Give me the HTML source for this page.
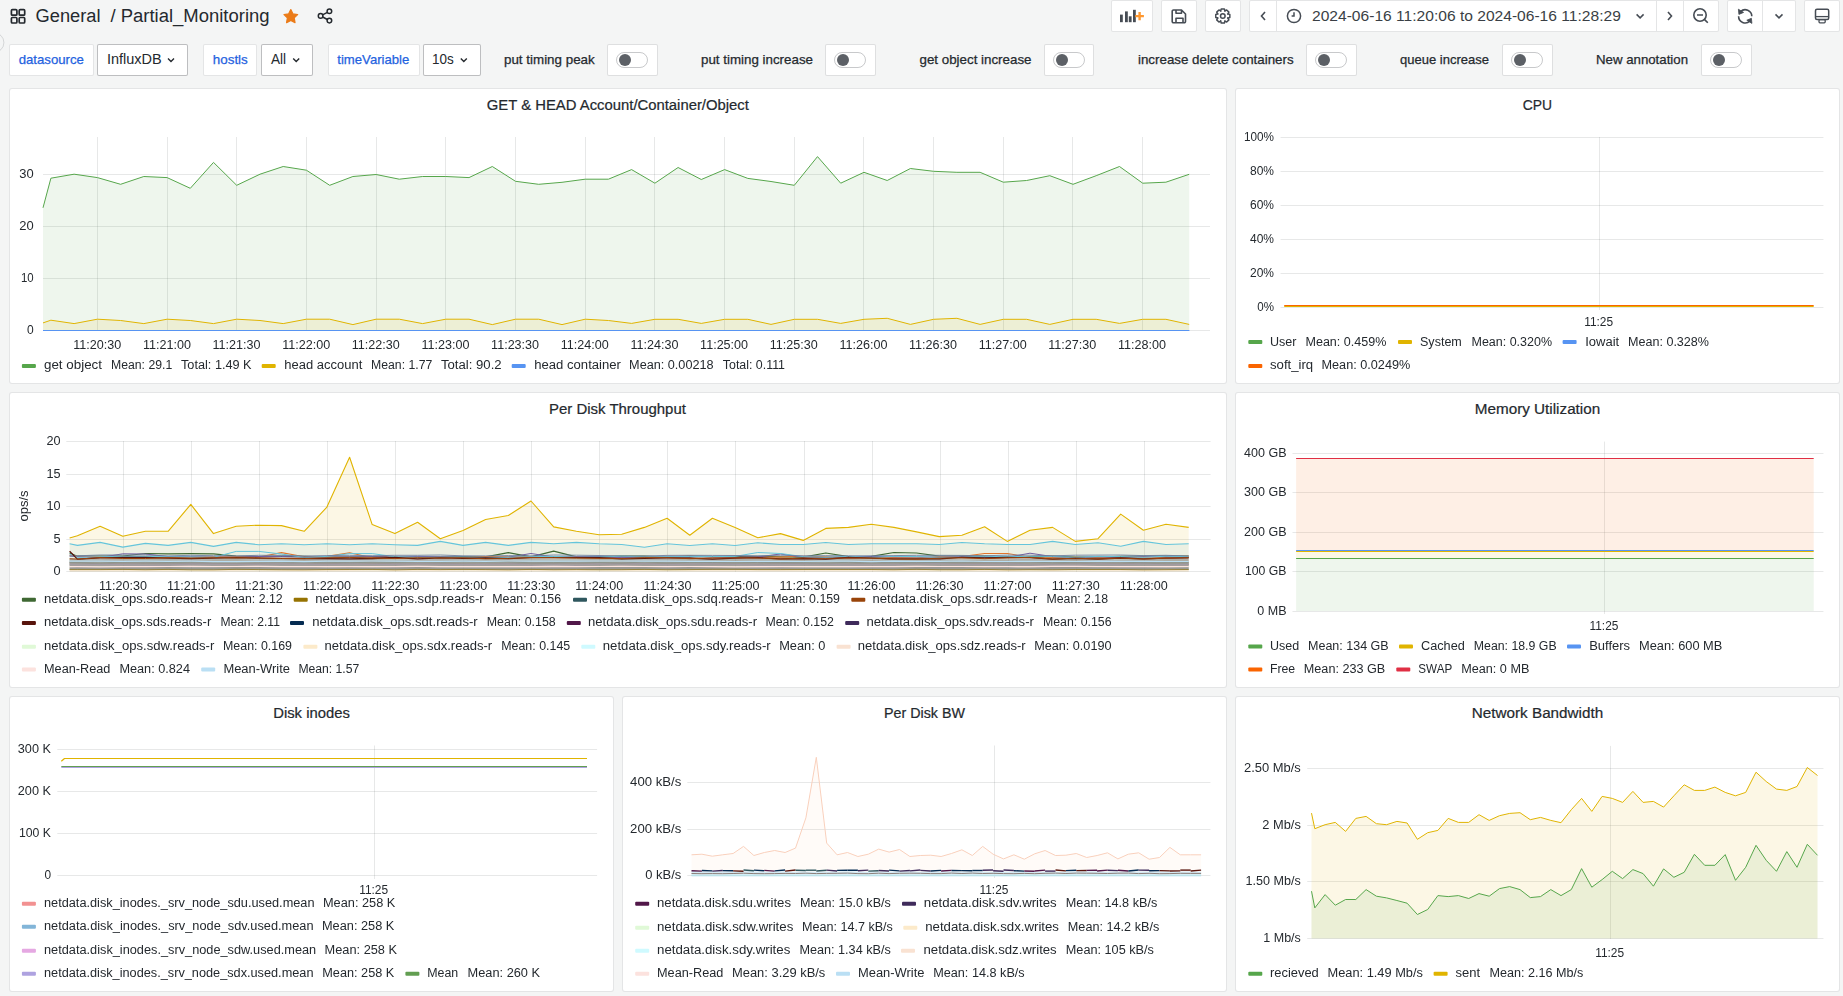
<!DOCTYPE html>
<html><head><meta charset="utf-8"><title>Partial_Monitoring - Dashboards - Grafana</title>
<style>
*{margin:0;padding:0;box-sizing:border-box}
html,body{width:1843px;height:996px;overflow:hidden;background:#f4f5f5;font-family:"Liberation Sans",sans-serif;color:#24292e}
.pn{position:absolute;background:#fff;border:1px solid rgba(36,41,46,0.12);border-radius:3px;box-sizing:content-box}
.bx{position:absolute;background:#fff;border:1px solid rgba(36,41,46,0.12);border-radius:2px;box-sizing:content-box}
svg.ov{position:absolute;left:0;top:0}
svg.gs{will-change:transform}
</style></head><body>
<div class="pn" style="left:9px;top:88px;width:1216px;height:294px"></div><div class="pn" style="left:1235px;top:88px;width:603px;height:294px"></div><div class="pn" style="left:9px;top:392px;width:1216px;height:294px"></div><div class="pn" style="left:1235px;top:392px;width:603px;height:294px"></div><div class="pn" style="left:9px;top:696px;width:603px;height:294px"></div><div class="pn" style="left:622px;top:696px;width:603px;height:294px"></div><div class="pn" style="left:1235px;top:696px;width:603px;height:294px"></div><div class="bx" style="left:1111px;top:0px;width:40px;height:30px;"></div><div class="bx" style="left:1161px;top:0px;width:34px;height:30px;"></div><div class="bx" style="left:1205px;top:0px;width:34px;height:30px;"></div><div class="bx" style="left:1249px;top:0px;width:468px;height:30px;"></div><div class="bx" style="left:1727px;top:0px;width:67px;height:30px;"></div><div class="bx" style="left:1804px;top:0px;width:34px;height:30px;"></div><div class="bx" style="left:9px;top:44px;width:83px;height:30px;border-color:rgba(36,41,46,0.12)"></div><div class="bx" style="left:203px;top:44px;width:52px;height:30px;border-color:rgba(36,41,46,0.12)"></div><div class="bx" style="left:328px;top:44px;width:90px;height:30px;border-color:rgba(36,41,46,0.12)"></div><div class="bx" style="left:97px;top:44px;width:89px;height:30px;border-color:rgba(36,41,46,0.30)"></div><div class="bx" style="left:261px;top:44px;width:50px;height:30px;border-color:rgba(36,41,46,0.30)"></div><div class="bx" style="left:423px;top:44px;width:56px;height:30px;border-color:rgba(36,41,46,0.30)"></div><div class="bx" style="left:607px;top:44px;width:49px;height:30px;border-color:rgba(36,41,46,0.15)"></div><div class="bx" style="left:825px;top:44px;width:49px;height:30px;border-color:rgba(36,41,46,0.15)"></div><div class="bx" style="left:1044px;top:44px;width:48px;height:30px;border-color:rgba(36,41,46,0.15)"></div><div class="bx" style="left:1306px;top:44px;width:49px;height:30px;border-color:rgba(36,41,46,0.15)"></div><div class="bx" style="left:1502px;top:44px;width:49px;height:30px;border-color:rgba(36,41,46,0.15)"></div><div class="bx" style="left:1701px;top:44px;width:49px;height:30px;border-color:rgba(36,41,46,0.15)"></div>
<svg class="ov" width="1843" height="996" viewBox="0 0 1843 996" font-family="Liberation Sans, sans-serif">
<rect x="11.4" y="9.7" width="5.5" height="5.5" rx="1" fill="none" stroke="#24292e" stroke-width="1.7"/>
<rect x="19.2" y="9.7" width="5.5" height="5.5" rx="1" fill="none" stroke="#24292e" stroke-width="1.7"/>
<rect x="11.4" y="17.5" width="5.5" height="5.5" rx="1" fill="none" stroke="#24292e" stroke-width="1.7"/>
<rect x="19.2" y="17.5" width="5.5" height="5.5" rx="1" fill="none" stroke="#24292e" stroke-width="1.7"/>
<text x="35.6" y="21.7" font-size="18" fill="#24292e" textLength="65.0" lengthAdjust="spacingAndGlyphs" >General</text>
<text x="110.4" y="21.7" font-size="18" fill="#24292e" textLength="159.2" lengthAdjust="spacingAndGlyphs" >/ Partial_Monitoring</text>
<path d="M290.80,9.60 L292.92,13.89 L297.65,14.58 L294.22,17.91 L295.03,22.62 L290.80,20.40 L286.57,22.62 L287.38,17.91 L283.95,14.58 L288.68,13.89 Z" fill="#eb7b18" stroke="#eb7b18" stroke-width="1.2" stroke-linejoin="round"/>
<g fill="none" stroke="#24292e" stroke-width="1.5"><circle cx="329.4" cy="11.2" r="2.3"/><circle cx="329.4" cy="20.6" r="2.3"/><circle cx="320.6" cy="15.9" r="2.3"/><line x1="322.6" y1="14.8" x2="327.4" y2="12.3"/><line x1="322.6" y1="17" x2="327.4" y2="19.5"/></g>
<rect x="1276" y="1" width="1" height="30" fill="rgba(36,41,46,0.12)" />
<rect x="1656" y="1" width="1" height="30" fill="rgba(36,41,46,0.12)" />
<rect x="1683" y="1" width="1" height="30" fill="rgba(36,41,46,0.12)" />
<rect x="1762" y="1" width="1" height="30" fill="rgba(36,41,46,0.12)" />
<rect x="1120" y="14.6" width="2.8" height="7.6" fill="#464c54" />
<rect x="1125" y="11.4" width="2.8" height="10.8" fill="#464c54" />
<rect x="1128.8" y="16.3" width="2.8" height="5.9" fill="#464c54" />
<rect x="1133" y="9.8" width="2.8" height="12.4" fill="#464c54" />
<path d="M1139.6,11.9 v8.4 M1135.3,16.1 h8.6" stroke="#ff9830" stroke-width="2.4"/>
<path d="M1173.5,10 h8 l4,4 v7.5 a1.3,1.3 0 0 1 -1.3,1.3 h-10.7 a1.3,1.3 0 0 1 -1.3,-1.3 v-10.2 a1.3,1.3 0 0 1 1.3,-1.3 Z M1176,10 v3.2 h5.5 v-3.2 M1176,22.8 v-4.5 h7 v4.5" fill="none" stroke="#464c54" stroke-width="1.6" stroke-linejoin="round"/>
<path d="M1229.83,14.43 L1229.83,17.57 L1227.64,18.16 L1227.75,17.89 L1228.88,19.86 L1226.66,22.08 L1224.69,20.95 L1224.96,20.84 L1224.37,23.03 L1221.23,23.03 L1220.64,20.84 L1220.91,20.95 L1218.94,22.08 L1216.72,19.86 L1217.85,17.89 L1217.96,18.16 L1215.77,17.57 L1215.77,14.43 L1217.96,13.84 L1217.85,14.11 L1216.72,12.14 L1218.94,9.92 L1220.91,11.05 L1220.64,11.16 L1221.23,8.97 L1224.37,8.97 L1224.96,11.16 L1224.69,11.05 L1226.66,9.92 L1228.88,12.14 L1227.75,14.11 L1227.64,13.84 Z" fill="none" stroke="#464c54" stroke-width="1.5" stroke-linejoin="round"/>
<circle cx="1222.8" cy="16" r="2.3" fill="none" stroke="#464c54" stroke-width="1.5"/>
<path d="M1265,12 l-3.5,4 l3.5,4" fill="none" stroke="#464c54" stroke-width="1.6"/>
<circle cx="1294" cy="16" r="6.6" fill="none" stroke="#464c54" stroke-width="1.5"/><path d="M1294,12.2 v3.8 h-2.4" fill="none" stroke="#464c54" stroke-width="1.5"/>
<text x="1312.0" y="21.0" font-size="15.5" fill="#3a3f45" textLength="308.8" lengthAdjust="spacingAndGlyphs" >2024-06-16 11:20:06 to 2024-06-16 11:28:29</text>
<path d="M1636.6,14.4 l3.5,3.5 l3.5,-3.5" fill="none" stroke="#464c54" stroke-width="1.5"/>
<path d="M1668,12 l3.5,4 l-3.5,4" fill="none" stroke="#464c54" stroke-width="1.6"/>
<circle cx="1700" cy="15" r="6.2" fill="none" stroke="#464c54" stroke-width="1.6"/><path d="M1697,15 h6 M1704.6,19.6 l3.2,3.2" fill="none" stroke="#464c54" stroke-width="1.6"/>
<path d="M1740.6,11.6 A6.6,6.6 0 0 1 1751.8,16.3 M1738.6,16.3 A6.6,6.6 0 0 0 1749.9,21" fill="none" stroke="#464c54" stroke-width="1.6"/>
<path d="M1738.4,9.2 L1743.6,12.4 L1738.9,14.4 Z M1751.9,23.4 L1746.8,20.2 L1751.4,18.3 Z" fill="#464c54" stroke="#464c54" stroke-width="0.8" stroke-linejoin="round"/>
<path d="M1775.5,14.4 l3.5,3.5 l3.5,-3.5" fill="none" stroke="#464c54" stroke-width="1.5"/>
<rect x="1815.5" y="9.2" width="13.2" height="10.4" rx="1.5" fill="none" stroke="#464c54" stroke-width="1.5"/><path d="M1815.5,16.6 h13.2" fill="none" stroke="#464c54" stroke-width="1.3"/><rect x="1819" y="19.6" width="6.2" height="3.2" rx="1" fill="none" stroke="#464c54" stroke-width="1.3"/>
<circle cx="-6" cy="42.6" r="9.9" fill="none" stroke="rgba(36,41,46,0.15)" stroke-width="1"/>
<text x="18.7" y="64.0" font-size="13" fill="#1f62e0" textLength="65.2" lengthAdjust="spacingAndGlyphs" stroke="#1f62e0" stroke-width="0.25" >datasource</text>
<text x="212.8" y="64.0" font-size="13" fill="#1f62e0" textLength="35.0" lengthAdjust="spacingAndGlyphs" stroke="#1f62e0" stroke-width="0.25" >hostls</text>
<text x="337.3" y="64.0" font-size="13" fill="#1f62e0" textLength="72.0" lengthAdjust="spacingAndGlyphs" stroke="#1f62e0" stroke-width="0.25" >timeVariable</text>
<text x="106.9" y="64.4" font-size="14" fill="#24292e" textLength="54.8" lengthAdjust="spacingAndGlyphs" >InfluxDB</text>
<text x="270.9" y="64.4" font-size="14" fill="#24292e" textLength="15.1" lengthAdjust="spacingAndGlyphs" >All</text>
<text x="432.0" y="64.4" font-size="14" fill="#24292e" textLength="21.7" lengthAdjust="spacingAndGlyphs" >10s</text>
<path d="M168,58.5 l3,3 l3,-3" fill="none" stroke="#24292e" stroke-width="1.4"/>
<path d="M293.2,58.5 l3,3 l3,-3" fill="none" stroke="#24292e" stroke-width="1.4"/>
<path d="M460.8,58.5 l3,3 l3,-3" fill="none" stroke="#24292e" stroke-width="1.4"/>
<text x="504.0" y="63.8" font-size="13" fill="#24292e" textLength="90.7" lengthAdjust="spacingAndGlyphs" stroke="#24292e" stroke-width="0.25" >put timing peak</text>
<text x="701.0" y="63.8" font-size="13" fill="#24292e" textLength="112.0" lengthAdjust="spacingAndGlyphs" stroke="#24292e" stroke-width="0.25" >put timing increase</text>
<text x="919.5" y="63.8" font-size="13" fill="#24292e" textLength="112.0" lengthAdjust="spacingAndGlyphs" stroke="#24292e" stroke-width="0.25" >get object increase</text>
<text x="1138.0" y="63.8" font-size="13" fill="#24292e" textLength="155.6" lengthAdjust="spacingAndGlyphs" stroke="#24292e" stroke-width="0.25" >increase delete containers</text>
<text x="1400.0" y="63.8" font-size="13" fill="#24292e" textLength="89.0" lengthAdjust="spacingAndGlyphs" stroke="#24292e" stroke-width="0.25" >queue increase</text>
<text x="1596.0" y="63.8" font-size="13" fill="#24292e" textLength="92.0" lengthAdjust="spacingAndGlyphs" stroke="#24292e" stroke-width="0.25" >New annotation</text>
<rect x="616.5" y="52.5" width="31" height="15" rx="7.5" fill="#fff" stroke="rgba(36,41,46,0.25)" stroke-width="1"/>
<circle cx="625" cy="60" r="6" fill="#5c6066"/>
<rect x="834.5" y="52.5" width="31" height="15" rx="7.5" fill="#fff" stroke="rgba(36,41,46,0.25)" stroke-width="1"/>
<circle cx="843" cy="60" r="6" fill="#5c6066"/>
<rect x="1053.5" y="52.5" width="31" height="15" rx="7.5" fill="#fff" stroke="rgba(36,41,46,0.25)" stroke-width="1"/>
<circle cx="1062" cy="60" r="6" fill="#5c6066"/>
<rect x="1315.5" y="52.5" width="31" height="15" rx="7.5" fill="#fff" stroke="rgba(36,41,46,0.25)" stroke-width="1"/>
<circle cx="1324" cy="60" r="6" fill="#5c6066"/>
<rect x="1511.5" y="52.5" width="31" height="15" rx="7.5" fill="#fff" stroke="rgba(36,41,46,0.25)" stroke-width="1"/>
<circle cx="1520" cy="60" r="6" fill="#5c6066"/>
<rect x="1710.5" y="52.5" width="31" height="15" rx="7.5" fill="#fff" stroke="rgba(36,41,46,0.25)" stroke-width="1"/>
<circle cx="1719" cy="60" r="6" fill="#5c6066"/>
<text x="486.8" y="109.5" font-size="14" fill="#24292e" textLength="262.1" lengthAdjust="spacingAndGlyphs" stroke="#24292e" stroke-width="0.2" >GET &amp; HEAD Account/Container/Object</text>
<text x="1522.7" y="109.5" font-size="14" fill="#24292e" textLength="29.3" lengthAdjust="spacingAndGlyphs" stroke="#24292e" stroke-width="0.2" >CPU</text>
<text x="549.0" y="413.5" font-size="14" fill="#24292e" textLength="136.9" lengthAdjust="spacingAndGlyphs" stroke="#24292e" stroke-width="0.2" >Per Disk Throughput</text>
<text x="1474.8" y="413.5" font-size="14" fill="#24292e" textLength="125.4" lengthAdjust="spacingAndGlyphs" stroke="#24292e" stroke-width="0.2" >Memory Utilization</text>
<text x="273.2" y="717.5" font-size="14" fill="#24292e" textLength="76.7" lengthAdjust="spacingAndGlyphs" stroke="#24292e" stroke-width="0.2" >Disk inodes</text>
<text x="884.1" y="717.5" font-size="14" fill="#24292e" textLength="80.8" lengthAdjust="spacingAndGlyphs" stroke="#24292e" stroke-width="0.2" >Per Disk BW</text>
<text x="1471.8" y="717.5" font-size="14" fill="#24292e" textLength="131.4" lengthAdjust="spacingAndGlyphs" stroke="#24292e" stroke-width="0.2" >Network Bandwidth</text>
</svg>
<svg class="ov gs" width="1843" height="996" viewBox="0 0 1843 996" font-family="Liberation Sans, sans-serif">
<rect x="43" y="174" width="1167" height="1" fill="rgba(36,41,46,0.11)" />
<rect x="43" y="226" width="1167" height="1" fill="rgba(36,41,46,0.11)" />
<rect x="43" y="278" width="1167" height="1" fill="rgba(36,41,46,0.11)" />
<rect x="97" y="137" width="1" height="194" fill="rgba(36,41,46,0.11)" />
<rect x="167" y="137" width="1" height="194" fill="rgba(36,41,46,0.11)" />
<rect x="236" y="137" width="1" height="194" fill="rgba(36,41,46,0.11)" />
<rect x="306" y="137" width="1" height="194" fill="rgba(36,41,46,0.11)" />
<rect x="376" y="137" width="1" height="194" fill="rgba(36,41,46,0.11)" />
<rect x="445" y="137" width="1" height="194" fill="rgba(36,41,46,0.11)" />
<rect x="515" y="137" width="1" height="194" fill="rgba(36,41,46,0.11)" />
<rect x="585" y="137" width="1" height="194" fill="rgba(36,41,46,0.11)" />
<rect x="654" y="137" width="1" height="194" fill="rgba(36,41,46,0.11)" />
<rect x="724" y="137" width="1" height="194" fill="rgba(36,41,46,0.11)" />
<rect x="794" y="137" width="1" height="194" fill="rgba(36,41,46,0.11)" />
<rect x="863" y="137" width="1" height="194" fill="rgba(36,41,46,0.11)" />
<rect x="933" y="137" width="1" height="194" fill="rgba(36,41,46,0.11)" />
<rect x="1003" y="137" width="1" height="194" fill="rgba(36,41,46,0.11)" />
<rect x="1072" y="137" width="1" height="194" fill="rgba(36,41,46,0.11)" />
<rect x="1142" y="137" width="1" height="194" fill="rgba(36,41,46,0.11)" />
<text x="19.2" y="178.0" font-size="12" fill="#24292e" textLength="14.4" lengthAdjust="spacingAndGlyphs" >30</text>
<text x="19.2" y="230.0" font-size="12" fill="#24292e" textLength="14.4" lengthAdjust="spacingAndGlyphs" >20</text>
<text x="20.9" y="282.0" font-size="12" fill="#24292e" textLength="12.7" lengthAdjust="spacingAndGlyphs" >10</text>
<text x="26.9" y="334.0" font-size="12" fill="#24292e" textLength="6.7" lengthAdjust="spacingAndGlyphs" >0</text>
<text x="73.2" y="349.3" font-size="12" fill="#24292e" textLength="48.0" lengthAdjust="spacingAndGlyphs" >11:20:30</text>
<text x="142.9" y="349.3" font-size="12" fill="#24292e" textLength="48.0" lengthAdjust="spacingAndGlyphs" >11:21:00</text>
<text x="212.5" y="349.3" font-size="12" fill="#24292e" textLength="48.0" lengthAdjust="spacingAndGlyphs" >11:21:30</text>
<text x="282.2" y="349.3" font-size="12" fill="#24292e" textLength="48.0" lengthAdjust="spacingAndGlyphs" >11:22:00</text>
<text x="351.8" y="349.3" font-size="12" fill="#24292e" textLength="48.0" lengthAdjust="spacingAndGlyphs" >11:22:30</text>
<text x="421.4" y="349.3" font-size="12" fill="#24292e" textLength="48.0" lengthAdjust="spacingAndGlyphs" >11:23:00</text>
<text x="491.1" y="349.3" font-size="12" fill="#24292e" textLength="48.0" lengthAdjust="spacingAndGlyphs" >11:23:30</text>
<text x="560.8" y="349.3" font-size="12" fill="#24292e" textLength="48.0" lengthAdjust="spacingAndGlyphs" >11:24:00</text>
<text x="630.4" y="349.3" font-size="12" fill="#24292e" textLength="48.0" lengthAdjust="spacingAndGlyphs" >11:24:30</text>
<text x="700.1" y="349.3" font-size="12" fill="#24292e" textLength="48.0" lengthAdjust="spacingAndGlyphs" >11:25:00</text>
<text x="769.7" y="349.3" font-size="12" fill="#24292e" textLength="48.0" lengthAdjust="spacingAndGlyphs" >11:25:30</text>
<text x="839.4" y="349.3" font-size="12" fill="#24292e" textLength="48.0" lengthAdjust="spacingAndGlyphs" >11:26:00</text>
<text x="909.0" y="349.3" font-size="12" fill="#24292e" textLength="48.0" lengthAdjust="spacingAndGlyphs" >11:26:30</text>
<text x="978.7" y="349.3" font-size="12" fill="#24292e" textLength="48.0" lengthAdjust="spacingAndGlyphs" >11:27:00</text>
<text x="1048.3" y="349.3" font-size="12" fill="#24292e" textLength="48.0" lengthAdjust="spacingAndGlyphs" >11:27:30</text>
<text x="1118.0" y="349.3" font-size="12" fill="#24292e" textLength="48.0" lengthAdjust="spacingAndGlyphs" >11:28:00</text>
<path d="M43.0,207.8 L50.9,178.2 L74.1,174.2 L97.4,177.6 L120.6,184.3 L143.8,176.5 L167.1,177.6 L190.3,188.3 L213.5,162.4 L236.7,185.3 L260.0,174.2 L283.2,166.5 L306.4,170.2 L329.7,185.3 L352.9,176.5 L376.1,174.5 L399.3,179.2 L422.6,176.5 L445.8,176.5 L469.0,177.6 L492.3,166.5 L515.5,181.3 L538.7,184.3 L562.0,182.3 L585.2,179.2 L608.4,179.2 L631.6,169.6 L654.9,183.2 L678.1,167.5 L701.3,179.5 L724.6,169.6 L747.8,178.4 L771.0,181.5 L794.3,185.3 L817.5,156.6 L840.7,183.2 L864.0,172.3 L887.2,180.5 L910.4,168.5 L933.6,171.3 L956.9,172.3 L980.1,172.3 L1003.3,182.2 L1026.6,180.5 L1049.8,175.7 L1073.0,184.3 L1096.2,175.7 L1119.5,166.5 L1142.7,183.2 L1165.9,182.2 L1189.2,174.3 L1189.2,330.5 L43.0,330.5 Z" fill="#56a64b" fill-opacity="0.1" stroke="none"/>
<path d="M43.0,207.8 L50.9,178.2 L74.1,174.2 L97.4,177.6 L120.6,184.3 L143.8,176.5 L167.1,177.6 L190.3,188.3 L213.5,162.4 L236.7,185.3 L260.0,174.2 L283.2,166.5 L306.4,170.2 L329.7,185.3 L352.9,176.5 L376.1,174.5 L399.3,179.2 L422.6,176.5 L445.8,176.5 L469.0,177.6 L492.3,166.5 L515.5,181.3 L538.7,184.3 L562.0,182.3 L585.2,179.2 L608.4,179.2 L631.6,169.6 L654.9,183.2 L678.1,167.5 L701.3,179.5 L724.6,169.6 L747.8,178.4 L771.0,181.5 L794.3,185.3 L817.5,156.6 L840.7,183.2 L864.0,172.3 L887.2,180.5 L910.4,168.5 L933.6,171.3 L956.9,172.3 L980.1,172.3 L1003.3,182.2 L1026.6,180.5 L1049.8,175.7 L1073.0,184.3 L1096.2,175.7 L1119.5,166.5 L1142.7,183.2 L1165.9,182.2 L1189.2,174.3" fill="none" stroke="#56a64b" stroke-width="1" stroke-linejoin="round"/>
<path d="M43.0,322.9 L50.9,320.2 L74.1,323.6 L97.4,319.2 L120.6,320.5 L143.8,323.6 L167.1,319.2 L190.3,320.5 L213.5,323.6 L236.7,319.2 L260.0,320.5 L283.2,323.6 L306.4,319.2 L329.7,319.2 L352.9,324.6 L376.1,319.2 L399.3,319.2 L422.6,323.6 L445.8,319.2 L469.0,319.2 L492.3,324.6 L515.5,319.2 L538.7,319.2 L562.0,324.6 L585.2,319.2 L608.4,320.5 L631.6,323.4 L654.9,319.3 L678.1,319.3 L701.3,323.4 L724.6,319.3 L747.8,319.3 L771.0,324.4 L794.3,319.3 L817.5,319.3 L840.7,323.4 L864.0,319.3 L887.2,318.3 L910.4,324.4 L933.6,319.3 L956.9,318.3 L980.1,324.4 L1003.3,319.3 L1026.6,319.3 L1049.8,324.4 L1073.0,319.3 L1096.2,319.3 L1119.5,323.4 L1142.7,319.3 L1165.9,319.3 L1189.2,324.4 L1189.2,330.5 L43.0,330.5 Z" fill="#e0b400" fill-opacity="0.1" stroke="none"/>
<path d="M43.0,322.9 L50.9,320.2 L74.1,323.6 L97.4,319.2 L120.6,320.5 L143.8,323.6 L167.1,319.2 L190.3,320.5 L213.5,323.6 L236.7,319.2 L260.0,320.5 L283.2,323.6 L306.4,319.2 L329.7,319.2 L352.9,324.6 L376.1,319.2 L399.3,319.2 L422.6,323.6 L445.8,319.2 L469.0,319.2 L492.3,324.6 L515.5,319.2 L538.7,319.2 L562.0,324.6 L585.2,319.2 L608.4,320.5 L631.6,323.4 L654.9,319.3 L678.1,319.3 L701.3,323.4 L724.6,319.3 L747.8,319.3 L771.0,324.4 L794.3,319.3 L817.5,319.3 L840.7,323.4 L864.0,319.3 L887.2,318.3 L910.4,324.4 L933.6,319.3 L956.9,318.3 L980.1,324.4 L1003.3,319.3 L1026.6,319.3 L1049.8,324.4 L1073.0,319.3 L1096.2,319.3 L1119.5,323.4 L1142.7,319.3 L1165.9,319.3 L1189.2,324.4" fill="none" stroke="#e0b400" stroke-width="1" stroke-linejoin="round"/>
<rect x="43" y="330" width="1167" height="1" fill="rgba(36,41,46,0.11)" />
<path d="M43.0,330.5 L1189.4,330.5" fill="none" stroke="#5794f2" stroke-width="1.2" stroke-linejoin="round"/>
<rect x="21.9" y="364.0" width="14" height="4" rx="1" fill="#56a64b"/>
<text x="44.0" y="369.3" font-size="12" fill="#24292e" textLength="58.0" lengthAdjust="spacingAndGlyphs" >get object</text>
<text x="111.0" y="369.3" font-size="12" fill="#24292e" textLength="61.2" lengthAdjust="spacingAndGlyphs" >Mean: 29.1</text>
<text x="181.0" y="369.3" font-size="12" fill="#24292e" textLength="70.6" lengthAdjust="spacingAndGlyphs" >Total: 1.49 K</text>
<rect x="261.7" y="364.0" width="14" height="4" rx="1" fill="#e0b400"/>
<text x="284.3" y="369.3" font-size="12" fill="#24292e" textLength="78.0" lengthAdjust="spacingAndGlyphs" >head account</text>
<text x="371.0" y="369.3" font-size="12" fill="#24292e" textLength="61.3" lengthAdjust="spacingAndGlyphs" >Mean: 1.77</text>
<text x="441.0" y="369.3" font-size="12" fill="#24292e" textLength="60.6" lengthAdjust="spacingAndGlyphs" >Total: 90.2</text>
<rect x="511.7" y="364.0" width="14" height="4" rx="1" fill="#5794f2"/>
<text x="534.2" y="369.3" font-size="12" fill="#24292e" textLength="86.8" lengthAdjust="spacingAndGlyphs" >head container</text>
<text x="629.1" y="369.3" font-size="12" fill="#24292e" textLength="84.5" lengthAdjust="spacingAndGlyphs" >Mean: 0.00218</text>
<text x="722.8" y="369.3" font-size="12" fill="#24292e" textLength="62.2" lengthAdjust="spacingAndGlyphs" >Total: 0.111</text>
<rect x="1280.6" y="137" width="542.8000000000002" height="1" fill="rgba(36,41,46,0.11)" />
<rect x="1280.6" y="171" width="542.8000000000002" height="1" fill="rgba(36,41,46,0.11)" />
<rect x="1280.6" y="205" width="542.8000000000002" height="1" fill="rgba(36,41,46,0.11)" />
<rect x="1280.6" y="239" width="542.8000000000002" height="1" fill="rgba(36,41,46,0.11)" />
<rect x="1280.6" y="273" width="542.8000000000002" height="1" fill="rgba(36,41,46,0.11)" />
<rect x="1280.6" y="307" width="542.8000000000002" height="1" fill="rgba(36,41,46,0.11)" />
<rect x="1599" y="137" width="1" height="173" fill="rgba(36,41,46,0.11)" />
<text x="1244.0" y="141.0" font-size="12" fill="#24292e" textLength="30.0" lengthAdjust="spacingAndGlyphs" >100%</text>
<text x="1250.0" y="175.0" font-size="12" fill="#24292e" textLength="24.0" lengthAdjust="spacingAndGlyphs" >80%</text>
<text x="1250.0" y="209.0" font-size="12" fill="#24292e" textLength="24.0" lengthAdjust="spacingAndGlyphs" >60%</text>
<text x="1250.0" y="243.0" font-size="12" fill="#24292e" textLength="24.0" lengthAdjust="spacingAndGlyphs" >40%</text>
<text x="1250.0" y="277.0" font-size="12" fill="#24292e" textLength="24.0" lengthAdjust="spacingAndGlyphs" >20%</text>
<text x="1257.3" y="311.0" font-size="12" fill="#24292e" textLength="16.7" lengthAdjust="spacingAndGlyphs" >0%</text>
<text x="1584.2" y="326.2" font-size="12" fill="#24292e" textLength="28.9" lengthAdjust="spacingAndGlyphs" >11:25</text>
<rect x="1284.2" y="306" width="529.5" height="1" fill="#e0b400" />
<rect x="1284.2" y="305" width="529.5" height="1" fill="#fa6400" />
<rect x="1248.3" y="340.0" width="14" height="4" rx="1" fill="#56a64b"/>
<text x="1270.0" y="346.2" font-size="12" fill="#24292e" textLength="26.5" lengthAdjust="spacingAndGlyphs" >User</text>
<text x="1305.5" y="346.2" font-size="12" fill="#24292e" textLength="80.8" lengthAdjust="spacingAndGlyphs" >Mean: 0.459%</text>
<rect x="1398.0" y="340.0" width="14" height="4" rx="1" fill="#e0b400"/>
<text x="1420.0" y="346.2" font-size="12" fill="#24292e" textLength="41.8" lengthAdjust="spacingAndGlyphs" >System</text>
<text x="1471.5" y="346.2" font-size="12" fill="#24292e" textLength="80.5" lengthAdjust="spacingAndGlyphs" >Mean: 0.320%</text>
<rect x="1562.6" y="340.0" width="14" height="4" rx="1" fill="#5794f2"/>
<text x="1585.2" y="346.2" font-size="12" fill="#24292e" textLength="34.0" lengthAdjust="spacingAndGlyphs" >Iowait</text>
<text x="1628.0" y="346.2" font-size="12" fill="#24292e" textLength="81.0" lengthAdjust="spacingAndGlyphs" >Mean: 0.328%</text>
<rect x="1248.3" y="364.0" width="14" height="4" rx="1" fill="#fa6400"/>
<text x="1270.0" y="369.3" font-size="12" fill="#24292e" textLength="43.2" lengthAdjust="spacingAndGlyphs" >soft_irq</text>
<text x="1321.5" y="369.3" font-size="12" fill="#24292e" textLength="88.8" lengthAdjust="spacingAndGlyphs" >Mean: 0.0249%</text>
<rect x="66.3" y="441" width="1144.3" height="1" fill="rgba(36,41,46,0.11)" />
<rect x="66.3" y="474" width="1144.3" height="1" fill="rgba(36,41,46,0.11)" />
<rect x="66.3" y="506" width="1144.3" height="1" fill="rgba(36,41,46,0.11)" />
<rect x="66.3" y="539" width="1144.3" height="1" fill="rgba(36,41,46,0.11)" />
<rect x="123" y="441" width="1" height="131" fill="rgba(36,41,46,0.11)" />
<rect x="191" y="441" width="1" height="131" fill="rgba(36,41,46,0.11)" />
<rect x="259" y="441" width="1" height="131" fill="rgba(36,41,46,0.11)" />
<rect x="327" y="441" width="1" height="131" fill="rgba(36,41,46,0.11)" />
<rect x="395" y="441" width="1" height="131" fill="rgba(36,41,46,0.11)" />
<rect x="463" y="441" width="1" height="131" fill="rgba(36,41,46,0.11)" />
<rect x="531" y="441" width="1" height="131" fill="rgba(36,41,46,0.11)" />
<rect x="599" y="441" width="1" height="131" fill="rgba(36,41,46,0.11)" />
<rect x="667" y="441" width="1" height="131" fill="rgba(36,41,46,0.11)" />
<rect x="735" y="441" width="1" height="131" fill="rgba(36,41,46,0.11)" />
<rect x="804" y="441" width="1" height="131" fill="rgba(36,41,46,0.11)" />
<rect x="872" y="441" width="1" height="131" fill="rgba(36,41,46,0.11)" />
<rect x="940" y="441" width="1" height="131" fill="rgba(36,41,46,0.11)" />
<rect x="1008" y="441" width="1" height="131" fill="rgba(36,41,46,0.11)" />
<rect x="1076" y="441" width="1" height="131" fill="rgba(36,41,46,0.11)" />
<rect x="1144" y="441" width="1" height="131" fill="rgba(36,41,46,0.11)" />
<text x="46.4" y="445.0" font-size="12" fill="#24292e" textLength="14.1" lengthAdjust="spacingAndGlyphs" >20</text>
<text x="46.4" y="478.0" font-size="12" fill="#24292e" textLength="14.1" lengthAdjust="spacingAndGlyphs" >15</text>
<text x="46.4" y="510.0" font-size="12" fill="#24292e" textLength="14.1" lengthAdjust="spacingAndGlyphs" >10</text>
<text x="53.4" y="543.0" font-size="12" fill="#24292e" textLength="7.1" lengthAdjust="spacingAndGlyphs" >5</text>
<text x="53.4" y="575.0" font-size="12" fill="#24292e" textLength="7.1" lengthAdjust="spacingAndGlyphs" >0</text>
<text x="0" y="0" font-size="12" fill="#24292e" text-anchor="middle" textLength="31" lengthAdjust="spacingAndGlyphs" transform="translate(27.8,506) rotate(-90)">ops/s</text>
<text x="99.0" y="590.2" font-size="12" fill="#24292e" textLength="48.0" lengthAdjust="spacingAndGlyphs" >11:20:30</text>
<text x="167.1" y="590.2" font-size="12" fill="#24292e" textLength="48.0" lengthAdjust="spacingAndGlyphs" >11:21:00</text>
<text x="235.1" y="590.2" font-size="12" fill="#24292e" textLength="48.0" lengthAdjust="spacingAndGlyphs" >11:21:30</text>
<text x="303.1" y="590.2" font-size="12" fill="#24292e" textLength="48.0" lengthAdjust="spacingAndGlyphs" >11:22:00</text>
<text x="371.2" y="590.2" font-size="12" fill="#24292e" textLength="48.0" lengthAdjust="spacingAndGlyphs" >11:22:30</text>
<text x="439.2" y="590.2" font-size="12" fill="#24292e" textLength="48.0" lengthAdjust="spacingAndGlyphs" >11:23:00</text>
<text x="507.3" y="590.2" font-size="12" fill="#24292e" textLength="48.0" lengthAdjust="spacingAndGlyphs" >11:23:30</text>
<text x="575.3" y="590.2" font-size="12" fill="#24292e" textLength="48.0" lengthAdjust="spacingAndGlyphs" >11:24:00</text>
<text x="643.4" y="590.2" font-size="12" fill="#24292e" textLength="48.0" lengthAdjust="spacingAndGlyphs" >11:24:30</text>
<text x="711.4" y="590.2" font-size="12" fill="#24292e" textLength="48.0" lengthAdjust="spacingAndGlyphs" >11:25:00</text>
<text x="779.5" y="590.2" font-size="12" fill="#24292e" textLength="48.0" lengthAdjust="spacingAndGlyphs" >11:25:30</text>
<text x="847.5" y="590.2" font-size="12" fill="#24292e" textLength="48.0" lengthAdjust="spacingAndGlyphs" >11:26:00</text>
<text x="915.6" y="590.2" font-size="12" fill="#24292e" textLength="48.0" lengthAdjust="spacingAndGlyphs" >11:26:30</text>
<text x="983.6" y="590.2" font-size="12" fill="#24292e" textLength="48.0" lengthAdjust="spacingAndGlyphs" >11:27:00</text>
<text x="1051.7" y="590.2" font-size="12" fill="#24292e" textLength="48.0" lengthAdjust="spacingAndGlyphs" >11:27:30</text>
<text x="1119.8" y="590.2" font-size="12" fill="#24292e" textLength="48.0" lengthAdjust="spacingAndGlyphs" >11:28:00</text>
<path d="M69.6,538.0 L77.4,535.7 L100.1,526.2 L122.8,536.3 L145.4,531.3 L168.1,531.3 L190.8,504.4 L213.5,533.6 L236.2,526.2 L258.8,525.2 L281.5,525.6 L304.2,531.3 L326.9,507.1 L349.6,457.3 L372.2,524.6 L394.9,533.6 L417.6,522.2 L440.3,538.7 L463.0,530.6 L485.6,519.5 L508.3,515.5 L531.0,501.0 L553.7,526.9 L576.4,531.3 L599.0,534.7 L621.7,534.3 L644.4,527.4 L667.1,518.2 L689.8,535.3 L712.4,518.2 L735.1,527.4 L757.8,537.7 L780.5,533.6 L803.2,540.4 L825.8,528.4 L848.5,527.4 L871.2,524.3 L893.9,527.4 L916.6,531.9 L939.2,536.6 L961.9,535.3 L984.6,526.7 L1007.3,541.4 L1030.0,530.2 L1052.6,527.4 L1075.3,541.4 L1098.0,538.7 L1120.7,514.1 L1143.4,530.2 L1166.0,524.3 L1188.7,527.4 L1188.7,571.5 L69.6,571.5 Z" fill="#e0b400" fill-opacity="0.1" stroke="none"/>
<path d="M69.6,543.7 L77.4,545.4 L100.1,542.4 L122.8,547.1 L145.4,543.4 L168.1,545.4 L190.8,542.4 L213.5,546.4 L236.2,542.4 L258.8,544.7 L281.5,543.7 L304.2,544.7 L326.9,543.7 L349.6,544.7 L372.2,543.7 L394.9,544.7 L417.6,545.4 L440.3,541.4 L463.0,545.4 L485.6,542.4 L508.3,545.4 L531.0,542.4 L553.7,543.7 L576.4,542.4 L599.0,543.7 L621.7,544.5 L644.4,547.2 L667.1,543.8 L689.8,545.5 L712.4,543.8 L735.1,545.5 L757.8,542.8 L780.5,544.5 L803.2,544.5 L825.8,542.5 L848.5,544.5 L871.2,543.8 L893.9,543.8 L916.6,543.8 L939.2,544.5 L961.9,542.5 L984.6,543.8 L1007.3,544.5 L1030.0,544.5 L1052.6,541.4 L1075.3,544.5 L1098.0,542.8 L1120.7,546.2 L1143.4,541.4 L1166.0,544.5 L1188.7,543.8 L1188.7,571.5 L69.6,571.5 Z" fill="#64B0C8" fill-opacity="0.1" stroke="none"/>
<path d="M69.6,558.4 L77.4,558.2 L100.1,558.6 L122.8,558.2 L145.4,558.5 L168.1,558.4 L190.8,558.1 L213.5,558.5 L236.2,558.1 L258.8,558.4 L281.5,558.2 L304.2,558.2 L326.9,558.4 L349.6,558.8 L372.2,558.2 L394.9,558.3 L417.6,558.6 L440.3,558.9 L463.0,558.6 L485.6,558.4 L508.3,558.9 L531.0,558.1 L553.7,558.8 L576.4,558.3 L599.0,558.2 L621.7,558.2 L644.4,558.3 L667.1,558.8 L689.8,558.2 L712.4,558.6 L735.1,558.6 L757.8,558.4 L780.5,558.5 L803.2,558.2 L825.8,558.1 L848.5,558.3 L871.2,558.6 L893.9,558.4 L916.6,558.4 L939.2,558.6 L961.9,558.5 L984.6,558.3 L1007.3,558.7 L1030.0,558.7 L1052.6,558.3 L1075.3,558.6 L1098.0,558.5 L1120.7,558.8 L1143.4,558.7 L1166.0,558.3 L1188.7,558.9 L1188.7,570 L69.6,570 Z" fill="#85837f" fill-opacity="0.3" stroke="none"/>
<path d="M69.6,558.5 L77.4,558.9 L100.1,559.3 L122.8,558.6 L145.4,559.0 L168.1,558.4 L190.8,559.2 L213.5,559.3 L236.2,559.1 L258.8,559.5 L281.5,558.8 L304.2,559.2 L326.9,559.1 L349.6,559.1 L372.2,558.9 L394.9,559.4 L417.6,559.5 L440.3,559.0 L463.0,559.2 L485.6,558.5 L508.3,559.2 L531.0,559.2 L553.7,559.6 L576.4,559.4 L599.0,558.7 L621.7,558.9 L644.4,559.2 L667.1,558.4 L689.8,559.0 L712.4,558.6 L735.1,558.5 L757.8,558.5 L780.5,559.3 L803.2,558.6 L825.8,558.7 L848.5,558.9 L871.2,559.4 L893.9,558.5 L916.6,558.9 L939.2,559.1 L961.9,559.5 L984.6,559.4 L1007.3,559.4 L1030.0,558.7 L1052.6,558.9 L1075.3,558.8 L1098.0,559.5 L1120.7,559.5 L1143.4,558.6 L1166.0,558.6 L1188.7,558.7 L1188.7,566 L69.6,566 Z" fill="#8f8d8a" fill-opacity="0.5" stroke="none"/>
<path d="M69.6,562.1 L77.4,562.3 L100.1,562.4 L122.8,562.1 L145.4,561.9 L168.1,562.2 L190.8,562.2 L213.5,562.4 L236.2,562.7 L258.8,562.5 L281.5,562.3 L304.2,562.4 L326.9,562.4 L349.6,561.9 L372.2,562.6 L394.9,562.5 L417.6,562.6 L440.3,562.5 L463.0,562.2 L485.6,562.2 L508.3,562.0 L531.0,562.4 L553.7,561.9 L576.4,562.0 L599.0,562.1 L621.7,562.0 L644.4,562.2 L667.1,561.9 L689.8,561.9 L712.4,562.0 L735.1,562.0 L757.8,562.2 L780.5,561.9 L803.2,562.6 L825.8,562.4 L848.5,562.0 L871.2,562.1 L893.9,562.2 L916.6,562.2 L939.2,562.0 L961.9,562.6 L984.6,562.7 L1007.3,562.3 L1030.0,562.3 L1052.6,562.0 L1075.3,562.0 L1098.0,562.2 L1120.7,562.1 L1143.4,562.6 L1166.0,562.0 L1188.7,561.9 L1188.7,566 L69.6,566 Z" fill="#8f8a88" fill-opacity="0.35" stroke="none"/>
<path d="M69.6,567.3 L77.4,567.0 L100.1,566.8 L122.8,567.0 L145.4,566.7 L168.1,567.0 L190.8,567.3 L213.5,567.2 L236.2,567.1 L258.8,566.9 L281.5,566.9 L304.2,566.8 L326.9,567.2 L349.6,567.0 L372.2,567.2 L394.9,566.9 L417.6,566.8 L440.3,567.2 L463.0,567.3 L485.6,567.2 L508.3,567.2 L531.0,567.2 L553.7,567.1 L576.4,566.8 L599.0,567.0 L621.7,566.9 L644.4,566.7 L667.1,566.7 L689.8,566.9 L712.4,566.9 L735.1,567.1 L757.8,567.3 L780.5,567.0 L803.2,567.3 L825.8,567.3 L848.5,567.3 L871.2,566.9 L893.9,566.8 L916.6,566.8 L939.2,566.8 L961.9,566.8 L984.6,567.1 L1007.3,567.2 L1030.0,567.2 L1052.6,567.0 L1075.3,567.1 L1098.0,567.2 L1120.7,566.8 L1143.4,567.1 L1166.0,567.2 L1188.7,567.2 L1188.7,570 L69.6,570 Z" fill="#8a8885" fill-opacity="0.75" stroke="none"/>
<path d="M69.6,570.1 L77.4,570.0 L100.1,569.9 L122.8,570.1 L145.4,569.9 L168.1,570.1 L190.8,570.2 L213.5,570.0 L236.2,570.0 L258.8,570.2 L281.5,570.1 L304.2,569.9 L326.9,569.9 L349.6,569.9 L372.2,570.2 L394.9,570.1 L417.6,569.9 L440.3,570.1 L463.0,570.2 L485.6,570.1 L508.3,569.9 L531.0,570.0 L553.7,569.9 L576.4,569.8 L599.0,570.2 L621.7,570.1 L644.4,570.0 L667.1,570.2 L689.8,570.0 L712.4,570.1 L735.1,570.1 L757.8,569.9 L780.5,569.9 L803.2,569.9 L825.8,569.9 L848.5,570.0 L871.2,569.9 L893.9,570.0 L916.6,569.9 L939.2,570.2 L961.9,569.9 L984.6,570.0 L1007.3,570.0 L1030.0,570.2 L1052.6,570.0 L1075.3,570.2 L1098.0,570.0 L1120.7,570.0 L1143.4,570.0 L1166.0,569.8 L1188.7,570.0 L1188.7,571.5 L69.6,571.5 Z" fill="#fbe3c8" fill-opacity="0.6" stroke="none"/>
<path d="M69.6,563.0 L77.4,562.7 L100.1,564.0 L122.8,563.0 L145.4,563.5 L168.1,563.9 L190.8,563.6 L213.5,563.2 L236.2,563.5 L258.8,563.6 L281.5,564.0 L304.2,562.9 L326.9,563.6 L349.6,563.1 L372.2,563.1 L394.9,563.9 L417.6,563.5 L440.3,563.6 L463.0,563.9 L485.6,564.2 L508.3,563.4 L531.0,563.7 L553.7,563.5 L576.4,563.5 L599.0,563.8 L621.7,563.4 L644.4,563.6 L667.1,563.5 L689.8,564.2 L712.4,563.8 L735.1,564.1 L757.8,564.2 L780.5,563.1 L803.2,563.6 L825.8,564.2 L848.5,564.0 L871.2,562.9 L893.9,562.9 L916.6,563.4 L939.2,562.8 L961.9,563.1 L984.6,562.8 L1007.3,563.8 L1030.0,564.0 L1052.6,564.1 L1075.3,562.9 L1098.0,563.8 L1120.7,563.8 L1143.4,562.9 L1166.0,564.1 L1188.7,564.2" fill="none" stroke="#9a9591" stroke-width="1.2" stroke-linejoin="round"/>
<path d="M69.6,564.2 L77.4,565.0 L100.1,564.4 L122.8,564.5 L145.4,565.1 L168.1,564.9 L190.8,564.1 L213.5,564.4 L236.2,564.5 L258.8,564.3 L281.5,564.1 L304.2,564.3 L326.9,564.8 L349.6,563.9 L372.2,564.6 L394.9,564.4 L417.6,563.9 L440.3,564.3 L463.0,564.6 L485.6,564.5 L508.3,564.0 L531.0,565.1 L553.7,564.8 L576.4,565.1 L599.0,564.0 L621.7,564.2 L644.4,563.9 L667.1,564.8 L689.8,564.2 L712.4,564.1 L735.1,564.4 L757.8,565.0 L780.5,564.9 L803.2,564.2 L825.8,564.1 L848.5,565.0 L871.2,564.6 L893.9,564.7 L916.6,564.0 L939.2,564.0 L961.9,564.7 L984.6,564.4 L1007.3,564.0 L1030.0,565.0 L1052.6,564.7 L1075.3,564.9 L1098.0,564.0 L1120.7,564.9 L1143.4,564.0 L1166.0,564.9 L1188.7,564.4" fill="none" stroke="#a39aa6" stroke-width="1" stroke-linejoin="round"/>
<path d="M69.6,562.3 L77.4,562.6 L100.1,563.0 L122.8,562.2 L145.4,562.1 L168.1,562.5 L190.8,562.2 L213.5,562.0 L236.2,562.1 L258.8,562.0 L281.5,562.1 L304.2,562.3 L326.9,562.3 L349.6,562.8 L372.2,562.2 L394.9,562.5 L417.6,562.1 L440.3,562.3 L463.0,561.9 L485.6,562.2 L508.3,561.9 L531.0,562.8 L553.7,562.6 L576.4,562.1 L599.0,562.5 L621.7,563.0 L644.4,562.0 L667.1,562.9 L689.8,562.4 L712.4,562.5 L735.1,562.9 L757.8,562.4 L780.5,562.5 L803.2,562.7 L825.8,563.1 L848.5,562.3 L871.2,562.9 L893.9,562.7 L916.6,562.7 L939.2,562.4 L961.9,562.3 L984.6,562.0 L1007.3,562.1 L1030.0,562.0 L1052.6,562.8 L1075.3,562.2 L1098.0,562.1 L1120.7,562.0 L1143.4,562.9 L1166.0,562.9 L1188.7,562.7" fill="none" stroke="#8e948a" stroke-width="1" stroke-linejoin="round"/>
<path d="M69.6,561.2 L77.4,561.1 L100.1,561.2 L122.8,561.3 L145.4,561.1 L168.1,561.3 L190.8,561.2 L213.5,561.6 L236.2,561.6 L258.8,561.3 L281.5,561.1 L304.2,561.6 L326.9,561.2 L349.6,561.2 L372.2,561.0 L394.9,561.2 L417.6,561.3 L440.3,561.3 L463.0,561.1 L485.6,561.3 L508.3,561.0 L531.0,561.2 L553.7,561.1 L576.4,561.2 L599.0,561.0 L621.7,561.0 L644.4,561.2 L667.1,561.1 L689.8,561.4 L712.4,561.3 L735.1,561.5 L757.8,561.4 L780.5,561.4 L803.2,561.5 L825.8,561.2 L848.5,561.2 L871.2,561.6 L893.9,561.1 L916.6,561.4 L939.2,561.4 L961.9,561.0 L984.6,561.5 L1007.3,561.5 L1030.0,561.4 L1052.6,561.4 L1075.3,561.5 L1098.0,561.1 L1120.7,561.3 L1143.4,561.3 L1166.0,561.5 L1188.7,561.5" fill="none" stroke="#BADFF4" stroke-width="1.2" stroke-linejoin="round"/>
<path d="M69.6,566.7 L77.4,566.6 L100.1,566.8 L122.8,566.7 L145.4,566.7 L168.1,566.5 L190.8,566.4 L213.5,566.5 L236.2,566.5 L258.8,566.4 L281.5,566.7 L304.2,566.6 L326.9,566.7 L349.6,566.7 L372.2,566.7 L394.9,566.6 L417.6,566.4 L440.3,566.7 L463.0,566.7 L485.6,566.6 L508.3,566.6 L531.0,566.7 L553.7,566.4 L576.4,566.7 L599.0,566.5 L621.7,566.4 L644.4,566.5 L667.1,566.7 L689.8,566.5 L712.4,566.7 L735.1,566.8 L757.8,566.6 L780.5,566.6 L803.2,566.6 L825.8,566.7 L848.5,566.7 L871.2,566.6 L893.9,566.7 L916.6,566.4 L939.2,566.5 L961.9,566.5 L984.6,566.7 L1007.3,566.5 L1030.0,566.6 L1052.6,566.4 L1075.3,566.4 L1098.0,566.5 L1120.7,566.7 L1143.4,566.7 L1166.0,566.7 L1188.7,566.5" fill="none" stroke="#FCE2DE" stroke-width="1.2" stroke-linejoin="round"/>
<path d="M69.6,569.6 L77.4,569.6 L100.1,569.6 L122.8,569.4 L145.4,569.8 L168.1,569.4 L190.8,569.9 L213.5,569.9 L236.2,569.3 L258.8,569.6 L281.5,569.8 L304.2,569.9 L326.9,569.6 L349.6,569.5 L372.2,569.4 L394.9,569.9 L417.6,569.4 L440.3,569.6 L463.0,569.4 L485.6,569.6 L508.3,569.9 L531.0,569.4 L553.7,569.8 L576.4,569.6 L599.0,569.8 L621.7,569.7 L644.4,569.4 L667.1,569.8 L689.8,569.6 L712.4,569.3 L735.1,569.3 L757.8,569.6 L780.5,569.6 L803.2,569.5 L825.8,569.4 L848.5,569.5 L871.2,569.5 L893.9,569.8 L916.6,569.3 L939.2,569.8 L961.9,569.8 L984.6,569.4 L1007.3,569.9 L1030.0,569.7 L1052.6,569.8 L1075.3,569.5 L1098.0,569.5 L1120.7,569.5 L1143.4,569.9 L1166.0,569.7 L1188.7,569.5" fill="none" stroke="#967302" stroke-width="0.6" stroke-linejoin="round"/>
<path d="M69.6,553.0 L77.4,556.2 L100.1,556.0 L122.8,556.0 L145.4,553.5 L168.1,553.8 L190.8,553.6 L213.5,553.8 L236.2,556.2 L258.8,556.5 L281.5,556.1 L304.2,556.3 L326.9,557.0 L349.6,557.0 L372.2,556.9 L394.9,556.7 L417.6,557.0 L440.3,557.0 L463.0,556.6 L485.6,556.8 L508.3,552.6 L531.0,556.8 L553.7,551.2 L576.4,556.8 L599.0,556.7 L621.7,556.2 L644.4,556.0 L667.1,557.0 L689.8,556.1 L712.4,556.5 L735.1,556.3 L757.8,556.3 L780.5,556.8 L803.2,557.1 L825.8,553.0 L848.5,556.7 L871.2,556.3 L893.9,552.5 L916.6,553.0 L939.2,556.1 L961.9,556.1 L984.6,556.1 L1007.3,557.0 L1030.0,556.5 L1052.6,556.2 L1075.3,557.0 L1098.0,557.1 L1120.7,556.4 L1143.4,556.1 L1166.0,556.1 L1188.7,556.0" fill="none" stroke="#3F6833" stroke-width="1.2" stroke-linejoin="round"/>
<path d="M69.6,555.0 L77.4,556.4 L100.1,556.6 L122.8,556.7 L145.4,557.1 L168.1,557.5 L190.8,557.3 L213.5,556.9 L236.2,556.9 L258.8,557.0 L281.5,552.6 L304.2,556.8 L326.9,556.4 L349.6,552.8 L372.2,557.7 L394.9,556.5 L417.6,557.0 L440.3,557.2 L463.0,557.5 L485.6,556.6 L508.3,556.7 L531.0,556.6 L553.7,556.9 L576.4,556.9 L599.0,557.6 L621.7,557.5 L644.4,557.5 L667.1,556.3 L689.8,556.3 L712.4,557.3 L735.1,557.6 L757.8,557.0 L780.5,557.1 L803.2,556.3 L825.8,556.8 L848.5,557.6 L871.2,557.5 L893.9,557.5 L916.6,557.7 L939.2,556.6 L961.9,556.5 L984.6,553.5 L1007.3,553.5 L1030.0,557.3 L1052.6,557.6 L1075.3,557.3 L1098.0,557.2 L1120.7,557.4 L1143.4,556.9 L1166.0,557.1 L1188.7,556.4" fill="none" stroke="#E0752D" stroke-width="1.1" stroke-linejoin="round"/>
<path d="M69.6,556.0 L77.4,556.7 L100.1,557.5 L122.8,553.8 L145.4,554.0 L168.1,556.6 L190.8,556.7 L213.5,557.2 L236.2,557.2 L258.8,556.5 L281.5,556.5 L304.2,557.0 L326.9,557.1 L349.6,556.9 L372.2,556.7 L394.9,557.1 L417.6,556.4 L440.3,556.8 L463.0,557.0 L485.6,557.6 L508.3,557.2 L531.0,553.5 L553.7,557.0 L576.4,556.7 L599.0,556.7 L621.7,557.6 L644.4,557.2 L667.1,556.8 L689.8,556.4 L712.4,557.0 L735.1,557.2 L757.8,556.9 L780.5,554.0 L803.2,557.2 L825.8,557.5 L848.5,556.7 L871.2,556.4 L893.9,556.8 L916.6,556.9 L939.2,557.2 L961.9,556.6 L984.6,557.4 L1007.3,557.3 L1030.0,553.2 L1052.6,556.6 L1075.3,557.6 L1098.0,556.8 L1120.7,557.4 L1143.4,556.7 L1166.0,556.7 L1188.7,557.3" fill="none" stroke="#705DA0" stroke-width="1.0" stroke-linejoin="round"/>
<path d="M69.6,554.0 L77.4,557.3 L100.1,556.8 L122.8,556.4 L145.4,556.5 L168.1,556.7 L190.8,557.0 L213.5,557.3 L236.2,551.4 L258.8,551.4 L281.5,554.0 L304.2,557.4 L326.9,556.4 L349.6,553.6 L372.2,553.6 L394.9,556.7 L417.6,557.3 L440.3,557.3 L463.0,557.1 L485.6,557.4 L508.3,557.3 L531.0,556.6 L553.7,556.4 L576.4,557.3 L599.0,557.1 L621.7,556.2 L644.4,557.0 L667.1,556.7 L689.8,556.6 L712.4,556.6 L735.1,556.4 L757.8,552.5 L780.5,553.5 L803.2,556.6 L825.8,557.3 L848.5,556.3 L871.2,557.4 L893.9,556.4 L916.6,556.6 L939.2,557.2 L961.9,557.2 L984.6,556.7 L1007.3,556.3 L1030.0,556.8 L1052.6,556.6 L1075.3,557.3 L1098.0,556.4 L1120.7,556.6 L1143.4,557.3 L1166.0,556.2 L1188.7,556.7" fill="none" stroke="#65C5DB" stroke-width="1.0" stroke-linejoin="round"/>
<path d="M69.6,556.0 L77.4,555.8 L100.1,555.0 L122.8,555.0 L145.4,555.1 L168.1,555.9 L190.8,555.3 L213.5,555.7 L236.2,555.9 L258.8,555.3 L281.5,555.3 L304.2,556.0 L326.9,555.6 L349.6,555.3 L372.2,555.7 L394.9,555.3 L417.6,555.3 L440.3,555.0 L463.0,555.8 L485.6,555.9 L508.3,555.6 L531.0,555.9 L553.7,555.0 L576.4,555.2 L599.0,555.5 L621.7,556.0 L644.4,556.0 L667.1,555.4 L689.8,555.3 L712.4,555.4 L735.1,555.5 L757.8,555.9 L780.5,555.2 L803.2,555.8 L825.8,555.7 L848.5,555.8 L871.2,555.8 L893.9,555.6 L916.6,555.3 L939.2,555.3 L961.9,555.4 L984.6,555.8 L1007.3,555.1 L1030.0,555.2 L1052.6,555.8 L1075.3,555.2 L1098.0,555.1 L1120.7,555.0 L1143.4,555.6 L1166.0,555.3 L1188.7,556.0" fill="none" stroke="#6d7fa0" stroke-width="0.9" stroke-linejoin="round"/>
<path d="M69.6,551.3 L77.4,559.1 L100.1,557.8 L122.8,557.5 L145.4,557.5 L168.1,558.2 L190.8,558.6 L213.5,558.1 L236.2,557.7 L258.8,558.1 L281.5,558.4 L304.2,558.5 L326.9,558.6 L349.6,558.8 L372.2,558.5 L394.9,557.5 L417.6,558.8 L440.3,557.8 L463.0,558.3 L485.6,558.0 L508.3,558.6 L531.0,557.7 L553.7,557.7 L576.4,557.7 L599.0,557.6 L621.7,558.9 L644.4,558.3 L667.1,557.9 L689.8,558.0 L712.4,559.1 L735.1,558.2 L757.8,557.7 L780.5,558.8 L803.2,558.5 L825.8,559.1 L848.5,557.5 L871.2,558.2 L893.9,558.8 L916.6,558.8 L939.2,558.9 L961.9,557.4 L984.6,557.8 L1007.3,557.5 L1030.0,557.6 L1052.6,559.1 L1075.3,558.3 L1098.0,559.0 L1120.7,558.0 L1143.4,558.9 L1166.0,558.1 L1188.7,557.8" fill="none" stroke="#58140C" stroke-width="1.3" stroke-linejoin="round"/>
<path d="M69.6,558.8 L77.4,559.1 L100.1,557.6 L122.8,558.5 L145.4,558.5 L168.1,557.8 L190.8,558.1 L213.5,557.7 L236.2,557.8 L258.8,557.9 L281.5,558.5 L304.2,558.6 L326.9,557.8 L349.6,557.4 L372.2,558.0 L394.9,558.6 L417.6,557.7 L440.3,558.0 L463.0,557.8 L485.6,558.8 L508.3,558.4 L531.0,557.5 L553.7,557.6 L576.4,558.1 L599.0,558.4 L621.7,558.6 L644.4,557.6 L667.1,557.7 L689.8,558.7 L712.4,558.1 L735.1,557.9 L757.8,558.0 L780.5,559.1 L803.2,558.0 L825.8,558.4 L848.5,558.0 L871.2,558.1 L893.9,559.0 L916.6,559.2 L939.2,558.1 L961.9,557.8 L984.6,558.7 L1007.3,557.8 L1030.0,557.4 L1052.6,559.0 L1075.3,558.2 L1098.0,558.9 L1120.7,558.1 L1143.4,559.0 L1166.0,558.2 L1188.7,557.7" fill="none" stroke="#99440A" stroke-width="1.0" stroke-linejoin="round"/>
<rect x="66.3" y="571" width="1144.3" height="1" fill="rgba(36,41,46,0.11)" />
<path d="M69.6,543.7 L77.4,545.4 L100.1,542.4 L122.8,547.1 L145.4,543.4 L168.1,545.4 L190.8,542.4 L213.5,546.4 L236.2,542.4 L258.8,544.7 L281.5,543.7 L304.2,544.7 L326.9,543.7 L349.6,544.7 L372.2,543.7 L394.9,544.7 L417.6,545.4 L440.3,541.4 L463.0,545.4 L485.6,542.4 L508.3,545.4 L531.0,542.4 L553.7,543.7 L576.4,542.4 L599.0,543.7 L621.7,544.5 L644.4,547.2 L667.1,543.8 L689.8,545.5 L712.4,543.8 L735.1,545.5 L757.8,542.8 L780.5,544.5 L803.2,544.5 L825.8,542.5 L848.5,544.5 L871.2,543.8 L893.9,543.8 L916.6,543.8 L939.2,544.5 L961.9,542.5 L984.6,543.8 L1007.3,544.5 L1030.0,544.5 L1052.6,541.4 L1075.3,544.5 L1098.0,542.8 L1120.7,546.2 L1143.4,541.4 L1166.0,544.5 L1188.7,543.8" fill="none" stroke="#65C5DB" stroke-width="1.1" stroke-linejoin="round"/>
<path d="M69.6,538.0 L77.4,535.7 L100.1,526.2 L122.8,536.3 L145.4,531.3 L168.1,531.3 L190.8,504.4 L213.5,533.6 L236.2,526.2 L258.8,525.2 L281.5,525.6 L304.2,531.3 L326.9,507.1 L349.6,457.3 L372.2,524.6 L394.9,533.6 L417.6,522.2 L440.3,538.7 L463.0,530.6 L485.6,519.5 L508.3,515.5 L531.0,501.0 L553.7,526.9 L576.4,531.3 L599.0,534.7 L621.7,534.3 L644.4,527.4 L667.1,518.2 L689.8,535.3 L712.4,518.2 L735.1,527.4 L757.8,537.7 L780.5,533.6 L803.2,540.4 L825.8,528.4 L848.5,527.4 L871.2,524.3 L893.9,527.4 L916.6,531.9 L939.2,536.6 L961.9,535.3 L984.6,526.7 L1007.3,541.4 L1030.0,530.2 L1052.6,527.4 L1075.3,541.4 L1098.0,538.7 L1120.7,514.1 L1143.4,530.2 L1166.0,524.3 L1188.7,527.4" fill="none" stroke="#e0b400" stroke-width="1.1" stroke-linejoin="round"/>
<rect x="21.9" y="597.7" width="14" height="4" rx="1" fill="#3F6833"/>
<text x="44.0" y="603.0" font-size="12" fill="#24292e" textLength="168.6" lengthAdjust="spacingAndGlyphs" >netdata.disk_ops.sdo.reads-r</text>
<text x="221.0" y="603.0" font-size="12" fill="#24292e" textLength="61.6" lengthAdjust="spacingAndGlyphs" >Mean: 2.12</text>
<rect x="293.7" y="597.7" width="14" height="4" rx="1" fill="#967302"/>
<text x="315.2" y="603.0" font-size="12" fill="#24292e" textLength="168.5" lengthAdjust="spacingAndGlyphs" >netdata.disk_ops.sdp.reads-r</text>
<text x="492.2" y="603.0" font-size="12" fill="#24292e" textLength="68.9" lengthAdjust="spacingAndGlyphs" >Mean: 0.156</text>
<rect x="573.0" y="597.7" width="14" height="4" rx="1" fill="#2F575E"/>
<text x="594.4" y="603.0" font-size="12" fill="#24292e" textLength="168.4" lengthAdjust="spacingAndGlyphs" >netdata.disk_ops.sdq.reads-r</text>
<text x="771.3" y="603.0" font-size="12" fill="#24292e" textLength="68.7" lengthAdjust="spacingAndGlyphs" >Mean: 0.159</text>
<rect x="851.3" y="597.7" width="14" height="4" rx="1" fill="#99440A"/>
<text x="872.5" y="603.0" font-size="12" fill="#24292e" textLength="164.8" lengthAdjust="spacingAndGlyphs" >netdata.disk_ops.sdr.reads-r</text>
<text x="1046.5" y="603.0" font-size="12" fill="#24292e" textLength="61.5" lengthAdjust="spacingAndGlyphs" >Mean: 2.18</text>
<rect x="21.9" y="621.1" width="14" height="4" rx="1" fill="#58140C"/>
<text x="44.0" y="626.4" font-size="12" fill="#24292e" textLength="167.3" lengthAdjust="spacingAndGlyphs" >netdata.disk_ops.sds.reads-r</text>
<text x="220.4" y="626.4" font-size="12" fill="#24292e" textLength="59.5" lengthAdjust="spacingAndGlyphs" >Mean: 2.11</text>
<rect x="290.0" y="621.1" width="14" height="4" rx="1" fill="#052B51"/>
<text x="312.2" y="626.4" font-size="12" fill="#24292e" textLength="165.5" lengthAdjust="spacingAndGlyphs" >netdata.disk_ops.sdt.reads-r</text>
<text x="486.8" y="626.4" font-size="12" fill="#24292e" textLength="68.9" lengthAdjust="spacingAndGlyphs" >Mean: 0.158</text>
<rect x="566.8" y="621.1" width="14" height="4" rx="1" fill="#511749"/>
<text x="588.0" y="626.4" font-size="12" fill="#24292e" textLength="169.0" lengthAdjust="spacingAndGlyphs" >netdata.disk_ops.sdu.reads-r</text>
<text x="765.5" y="626.4" font-size="12" fill="#24292e" textLength="68.4" lengthAdjust="spacingAndGlyphs" >Mean: 0.152</text>
<rect x="845.2" y="621.1" width="14" height="4" rx="1" fill="#3F2B5B"/>
<text x="866.4" y="626.4" font-size="12" fill="#24292e" textLength="167.5" lengthAdjust="spacingAndGlyphs" >netdata.disk_ops.sdv.reads-r</text>
<text x="1043.0" y="626.4" font-size="12" fill="#24292e" textLength="68.5" lengthAdjust="spacingAndGlyphs" >Mean: 0.156</text>
<rect x="21.9" y="644.7" width="14" height="4" rx="1" fill="#E0F9D7"/>
<text x="44.0" y="650.0" font-size="12" fill="#24292e" textLength="170.3" lengthAdjust="spacingAndGlyphs" >netdata.disk_ops.sdw.reads-r</text>
<text x="223.0" y="650.0" font-size="12" fill="#24292e" textLength="69.0" lengthAdjust="spacingAndGlyphs" >Mean: 0.169</text>
<rect x="303.4" y="644.7" width="14" height="4" rx="1" fill="#FCEACA"/>
<text x="324.6" y="650.0" font-size="12" fill="#24292e" textLength="167.6" lengthAdjust="spacingAndGlyphs" >netdata.disk_ops.sdx.reads-r</text>
<text x="501.2" y="650.0" font-size="12" fill="#24292e" textLength="69.0" lengthAdjust="spacingAndGlyphs" >Mean: 0.145</text>
<rect x="581.3" y="644.7" width="14" height="4" rx="1" fill="#CFFAFF"/>
<text x="602.8" y="650.0" font-size="12" fill="#24292e" textLength="167.9" lengthAdjust="spacingAndGlyphs" >netdata.disk_ops.sdy.reads-r</text>
<text x="779.2" y="650.0" font-size="12" fill="#24292e" textLength="46.2" lengthAdjust="spacingAndGlyphs" >Mean: 0</text>
<rect x="836.6" y="644.7" width="14" height="4" rx="1" fill="#F9E2D2"/>
<text x="857.8" y="650.0" font-size="12" fill="#24292e" textLength="167.9" lengthAdjust="spacingAndGlyphs" >netdata.disk_ops.sdz.reads-r</text>
<text x="1034.2" y="650.0" font-size="12" fill="#24292e" textLength="77.3" lengthAdjust="spacingAndGlyphs" >Mean: 0.0190</text>
<rect x="21.9" y="667.5" width="14" height="4" rx="1" fill="#FCE2DE"/>
<text x="44.0" y="672.8" font-size="12" fill="#24292e" textLength="66.3" lengthAdjust="spacingAndGlyphs" >Mean-Read</text>
<text x="119.4" y="672.8" font-size="12" fill="#24292e" textLength="70.6" lengthAdjust="spacingAndGlyphs" >Mean: 0.824</text>
<rect x="201.2" y="667.5" width="14" height="4" rx="1" fill="#BADFF4"/>
<text x="223.4" y="672.8" font-size="12" fill="#24292e" textLength="66.6" lengthAdjust="spacingAndGlyphs" >Mean-Write</text>
<text x="298.4" y="672.8" font-size="12" fill="#24292e" textLength="60.9" lengthAdjust="spacingAndGlyphs" >Mean: 1.57</text>
<rect x="1292.5" y="453" width="530.9000000000001" height="1" fill="rgba(36,41,46,0.11)" />
<rect x="1292.5" y="492" width="530.9000000000001" height="1" fill="rgba(36,41,46,0.11)" />
<rect x="1292.5" y="532" width="530.9000000000001" height="1" fill="rgba(36,41,46,0.11)" />
<rect x="1292.5" y="571" width="530.9000000000001" height="1" fill="rgba(36,41,46,0.11)" />
<rect x="1604" y="441.6" width="1" height="172.39999999999998" fill="rgba(36,41,46,0.11)" />
<rect x="1296.1" y="459" width="517.6000000000001" height="92" fill="#fa6400" fill-opacity="0.1"/>
<rect x="1296.1" y="552" width="517.6000000000001" height="6" fill="#e0b400" fill-opacity="0.1"/>
<rect x="1296.1" y="559" width="517.6000000000001" height="52" fill="#56a64b" fill-opacity="0.1"/>
<rect x="1292.5" y="611" width="530.9000000000001" height="1" fill="rgba(36,41,46,0.11)" />
<rect x="1296.1" y="458" width="517.6000000000001" height="1" fill="#e02f44" />
<rect x="1296.1" y="550" width="517.6000000000001" height="1" fill="#5794f2" />
<rect x="1296.1" y="551" width="517.6000000000001" height="1" fill="#e0b400" />
<rect x="1296.1" y="558" width="517.6000000000001" height="1" fill="#56a64b" />
<text x="1244.0" y="457.0" font-size="12" fill="#24292e" textLength="42.5" lengthAdjust="spacingAndGlyphs" >400 GB</text>
<text x="1244.0" y="496.0" font-size="12" fill="#24292e" textLength="42.5" lengthAdjust="spacingAndGlyphs" >300 GB</text>
<text x="1244.0" y="536.0" font-size="12" fill="#24292e" textLength="42.5" lengthAdjust="spacingAndGlyphs" >200 GB</text>
<text x="1245.0" y="575.0" font-size="12" fill="#24292e" textLength="41.5" lengthAdjust="spacingAndGlyphs" >100 GB</text>
<text x="1257.3" y="615.0" font-size="12" fill="#24292e" textLength="29.2" lengthAdjust="spacingAndGlyphs" >0 MB</text>
<text x="1589.5" y="629.8" font-size="12" fill="#24292e" textLength="28.9" lengthAdjust="spacingAndGlyphs" >11:25</text>
<rect x="1248.3" y="644.4" width="14" height="4" rx="1" fill="#56a64b"/>
<text x="1270.0" y="649.7" font-size="12" fill="#24292e" textLength="29.2" lengthAdjust="spacingAndGlyphs" >Used</text>
<text x="1308.0" y="649.7" font-size="12" fill="#24292e" textLength="80.7" lengthAdjust="spacingAndGlyphs" >Mean: 134 GB</text>
<rect x="1399.0" y="644.4" width="14" height="4" rx="1" fill="#e0b400"/>
<text x="1421.0" y="649.7" font-size="12" fill="#24292e" textLength="43.8" lengthAdjust="spacingAndGlyphs" >Cached</text>
<text x="1473.8" y="649.7" font-size="12" fill="#24292e" textLength="82.8" lengthAdjust="spacingAndGlyphs" >Mean: 18.9 GB</text>
<rect x="1567.0" y="644.4" width="14" height="4" rx="1" fill="#5794f2"/>
<text x="1589.2" y="649.7" font-size="12" fill="#24292e" textLength="40.9" lengthAdjust="spacingAndGlyphs" >Buffers</text>
<text x="1639.0" y="649.7" font-size="12" fill="#24292e" textLength="83.3" lengthAdjust="spacingAndGlyphs" >Mean: 600 MB</text>
<rect x="1248.3" y="667.5" width="14" height="4" rx="1" fill="#fa6400"/>
<text x="1270.0" y="672.8" font-size="12" fill="#24292e" textLength="25.2" lengthAdjust="spacingAndGlyphs" >Free</text>
<text x="1303.8" y="672.8" font-size="12" fill="#24292e" textLength="81.5" lengthAdjust="spacingAndGlyphs" >Mean: 233 GB</text>
<rect x="1396.3" y="667.5" width="14" height="4" rx="1" fill="#e02f44"/>
<text x="1418.3" y="672.8" font-size="12" fill="#24292e" textLength="33.9" lengthAdjust="spacingAndGlyphs" >SWAP</text>
<text x="1461.2" y="672.8" font-size="12" fill="#24292e" textLength="68.2" lengthAdjust="spacingAndGlyphs" >Mean: 0 MB</text>
<rect x="57.3" y="749" width="539.8000000000001" height="1" fill="rgba(36,41,46,0.11)" />
<rect x="57.3" y="791" width="539.8000000000001" height="1" fill="rgba(36,41,46,0.11)" />
<rect x="57.3" y="833" width="539.8000000000001" height="1" fill="rgba(36,41,46,0.11)" />
<rect x="57.3" y="875" width="539.8000000000001" height="1" fill="rgba(36,41,46,0.11)" />
<rect x="374" y="745.5" width="1" height="133.5" fill="rgba(36,41,46,0.11)" />
<text x="17.8" y="753.0" font-size="12" fill="#24292e" textLength="33.2" lengthAdjust="spacingAndGlyphs" >300 K</text>
<text x="17.8" y="795.0" font-size="12" fill="#24292e" textLength="33.2" lengthAdjust="spacingAndGlyphs" >200 K</text>
<text x="19.0" y="837.0" font-size="12" fill="#24292e" textLength="32.0" lengthAdjust="spacingAndGlyphs" >100 K</text>
<text x="44.4" y="879.0" font-size="12" fill="#24292e" textLength="6.6" lengthAdjust="spacingAndGlyphs" >0</text>
<text x="359.2" y="894.0" font-size="12" fill="#24292e" textLength="28.9" lengthAdjust="spacingAndGlyphs" >11:25</text>
<path d="M61.3,761.3 L64.5,758.5 L587.0,758.5" fill="none" stroke="#e0b400" stroke-width="1.2" stroke-linejoin="round"/>
<rect x="61.3" y="767" width="525.7" height="1" fill="#AEA2E0" />
<rect x="61.3" y="766" width="525.7" height="1" fill="#629E51" />
<rect x="21.9" y="901.7" width="14" height="4" rx="1" fill="#F29191"/>
<text x="44.0" y="907.0" font-size="12" fill="#24292e" textLength="270.5" lengthAdjust="spacingAndGlyphs" >netdata.disk_inodes._srv_node_sdu.used.mean</text>
<text x="323.0" y="907.0" font-size="12" fill="#24292e" textLength="72.3" lengthAdjust="spacingAndGlyphs" >Mean: 258 K</text>
<rect x="21.9" y="924.7" width="14" height="4" rx="1" fill="#82B5D8"/>
<text x="44.0" y="930.0" font-size="12" fill="#24292e" textLength="269.5" lengthAdjust="spacingAndGlyphs" >netdata.disk_inodes._srv_node_sdv.used.mean</text>
<text x="322.0" y="930.0" font-size="12" fill="#24292e" textLength="72.3" lengthAdjust="spacingAndGlyphs" >Mean: 258 K</text>
<rect x="21.9" y="948.7" width="14" height="4" rx="1" fill="#E5A8E2"/>
<text x="44.0" y="954.0" font-size="12" fill="#24292e" textLength="272.2" lengthAdjust="spacingAndGlyphs" >netdata.disk_inodes._srv_node_sdw.used.mean</text>
<text x="324.6" y="954.0" font-size="12" fill="#24292e" textLength="72.4" lengthAdjust="spacingAndGlyphs" >Mean: 258 K</text>
<rect x="21.9" y="971.7" width="14" height="4" rx="1" fill="#AEA2E0"/>
<text x="44.0" y="977.0" font-size="12" fill="#24292e" textLength="269.5" lengthAdjust="spacingAndGlyphs" >netdata.disk_inodes._srv_node_sdx.used.mean</text>
<text x="322.3" y="977.0" font-size="12" fill="#24292e" textLength="72.0" lengthAdjust="spacingAndGlyphs" >Mean: 258 K</text>
<rect x="405.4" y="971.7" width="14" height="4" rx="1" fill="#629E51"/>
<text x="427.2" y="977.0" font-size="12" fill="#24292e" textLength="31.0" lengthAdjust="spacingAndGlyphs" >Mean</text>
<text x="467.6" y="977.0" font-size="12" fill="#24292e" textLength="72.4" lengthAdjust="spacingAndGlyphs" >Mean: 260 K</text>
<rect x="687.3" y="782" width="523.1000000000001" height="1" fill="rgba(36,41,46,0.11)" />
<rect x="687.3" y="829" width="523.1000000000001" height="1" fill="rgba(36,41,46,0.11)" />
<rect x="994" y="745.5" width="1" height="132.5" fill="rgba(36,41,46,0.11)" />
<text x="630.1" y="786.0" font-size="12" fill="#24292e" textLength="51.2" lengthAdjust="spacingAndGlyphs" >400 kB/s</text>
<text x="630.1" y="833.0" font-size="12" fill="#24292e" textLength="51.2" lengthAdjust="spacingAndGlyphs" >200 kB/s</text>
<text x="645.3" y="879.0" font-size="12" fill="#24292e" textLength="36.0" lengthAdjust="spacingAndGlyphs" >0 kB/s</text>
<text x="979.5" y="894.0" font-size="12" fill="#24292e" textLength="28.9" lengthAdjust="spacingAndGlyphs" >11:25</text>
<path d="M691.5,854.8 L701.9,854.2 L712.3,856.2 L722.7,854.8 L733.1,853.5 L743.5,846.4 L753.9,855.5 L764.3,852.5 L774.7,850.5 L785.1,852.5 L795.5,848.1 L805.9,817.8 L816.3,757.3 L826.7,843.1 L837.1,854.8 L847.5,852.5 L857.9,856.5 L868.3,854.2 L878.7,849.1 L889.1,852.1 L899.5,849.5 L909.9,856.5 L920.3,855.5 L930.7,855.2 L941.1,856.5 L951.5,853.5 L961.9,849.8 L972.3,855.5 L982.7,846.4 L993.1,854.2 L1003.5,858.9 L1013.9,854.8 L1024.3,859.2 L1034.7,853.8 L1045.1,850.5 L1055.5,855.5 L1065.9,855.2 L1076.3,853.5 L1086.7,857.5 L1097.1,855.5 L1107.5,852.8 L1117.9,858.9 L1128.3,854.2 L1138.7,852.8 L1149.1,859.2 L1159.5,857.5 L1169.9,847.4 L1180.3,854.8 L1190.7,854.8 L1201.1,854.8 L1201.1,875.5 L691.5,875.5 Z" fill="#F9BA8F" fill-opacity="0.06" stroke="none"/>
<path d="M691.5,871.3 L701.9,871.5 L712.3,871.4 L722.7,871.6 L733.1,871.6 L743.5,871.2 L753.9,871.2 L764.3,871.7 L774.7,871.4 L785.1,871.3 L795.5,871.8 L805.9,871.5 L816.3,871.7 L826.7,871.5 L837.1,871.6 L847.5,871.3 L857.9,871.6 L868.3,871.7 L878.7,871.5 L889.1,871.6 L899.5,871.6 L909.9,871.2 L920.3,871.7 L930.7,871.6 L941.1,871.4 L951.5,871.2 L961.9,871.7 L972.3,871.5 L982.7,871.6 L993.1,871.7 L1003.5,871.6 L1013.9,871.8 L1024.3,871.4 L1034.7,871.7 L1045.1,871.5 L1055.5,871.8 L1065.9,871.7 L1076.3,871.3 L1086.7,871.3 L1097.1,871.3 L1107.5,871.8 L1117.9,871.5 L1128.3,871.6 L1138.7,871.4 L1149.1,871.5 L1159.5,871.4 L1169.9,871.4 L1180.3,871.6 L1190.7,871.6 L1201.1,871.7 L1201.1,876.5 L691.5,876.5 Z" fill="#BADFF4" fill-opacity="0.6" stroke="none"/>
<path d="M691.5,875.3 L701.9,875.3 L712.3,875.3 L722.7,875.3 L733.1,875.3 L743.5,875.3 L753.9,875.3 L764.3,875.3 L774.7,875.3 L785.1,875.3 L795.5,875.3 L805.9,875.3 L816.3,875.3 L826.7,875.3 L837.1,875.3 L847.5,875.3 L857.9,875.3 L868.3,875.3 L878.7,875.3 L889.1,875.3 L899.5,875.3 L909.9,875.3 L920.3,875.3 L930.7,875.3 L941.1,875.3 L951.5,875.3 L961.9,875.3 L972.3,875.3 L982.7,875.3 L993.1,875.3 L1003.5,875.3 L1013.9,875.3 L1024.3,875.3 L1034.7,875.3 L1045.1,875.3 L1055.5,875.3 L1065.9,875.3 L1076.3,875.3 L1086.7,875.3 L1097.1,875.3 L1107.5,875.3 L1117.9,875.3 L1128.3,875.3 L1138.7,875.3 L1149.1,875.3 L1159.5,875.3 L1169.9,875.3 L1180.3,875.3 L1190.7,875.3 L1201.1,875.3" fill="none" stroke="#CFFAFF" stroke-width="1.2" stroke-linejoin="round"/>
<path d="M691.5,873.5 L701.9,873.7 L712.3,873.6 L722.7,873.7 L733.1,873.5 L743.5,873.2 L753.9,873.6 L764.3,873.7 L774.7,873.6 L785.1,873.4 L795.5,873.5 L805.9,873.2 L816.3,873.6 L826.7,873.4 L837.1,873.3 L847.5,873.1 L857.9,873.6 L868.3,873.7 L878.7,873.2 L889.1,873.6 L899.5,873.3 L909.9,873.2 L920.3,873.3 L930.7,873.6 L941.1,873.6 L951.5,873.1 L961.9,873.5 L972.3,873.1 L982.7,873.5 L993.1,873.3 L1003.5,873.6 L1013.9,873.7 L1024.3,873.4 L1034.7,873.7 L1045.1,873.3 L1055.5,873.1 L1065.9,873.5 L1076.3,873.1 L1086.7,873.2 L1097.1,873.3 L1107.5,873.5 L1117.9,873.2 L1128.3,873.1 L1138.7,873.6 L1149.1,873.3 L1159.5,873.7 L1169.9,873.6 L1180.3,873.3 L1190.7,873.4 L1201.1,873.4" fill="none" stroke="#8c7f78" stroke-width="1.0" stroke-linejoin="round"/>
<path d="M691.5,870.7 L701.9,871.1" stroke="#511749" stroke-width="1.4" fill="none"/>
<path d="M701.9,870.5 L712.3,870.9" stroke="#052B51" stroke-width="1.4" fill="none"/>
<path d="M712.3,871.1 L722.7,870.5" stroke="#3F2B5B" stroke-width="1.4" fill="none"/>
<path d="M722.7,870.6 L733.1,870.7" stroke="#052B51" stroke-width="1.4" fill="none"/>
<path d="M733.1,870.9 L743.5,871.2" stroke="#58140C" stroke-width="1.4" fill="none"/>
<path d="M743.5,870.0 L753.9,870.7" stroke="#2F575E" stroke-width="1.4" fill="none"/>
<path d="M753.9,870.1 L764.3,870.8" stroke="#052B51" stroke-width="1.4" fill="none"/>
<path d="M764.3,870.4 L774.7,871.1" stroke="#511749" stroke-width="1.4" fill="none"/>
<path d="M774.7,870.9 L785.1,870.0" stroke="#052B51" stroke-width="1.4" fill="none"/>
<path d="M785.1,871.1 L795.5,870.0" stroke="#58140C" stroke-width="1.4" fill="none"/>
<path d="M795.5,870.3 L805.9,870.5" stroke="#2F575E" stroke-width="1.4" fill="none"/>
<path d="M805.9,870.2 L816.3,870.2" stroke="#2F575E" stroke-width="1.4" fill="none"/>
<path d="M816.3,871.0 L826.7,870.3" stroke="#2F575E" stroke-width="1.4" fill="none"/>
<path d="M826.7,870.1 L837.1,871.0" stroke="#3F2B5B" stroke-width="1.4" fill="none"/>
<path d="M837.1,870.4 L847.5,870.3" stroke="#052B51" stroke-width="1.4" fill="none"/>
<path d="M847.5,870.3 L857.9,870.2" stroke="#052B51" stroke-width="1.4" fill="none"/>
<path d="M857.9,870.8 L868.3,870.1" stroke="#3F2B5B" stroke-width="1.4" fill="none"/>
<path d="M868.3,871.1 L878.7,870.8" stroke="#2F575E" stroke-width="1.4" fill="none"/>
<path d="M878.7,870.5 L889.1,871.0" stroke="#3F2B5B" stroke-width="1.4" fill="none"/>
<path d="M889.1,870.1 L899.5,870.9" stroke="#052B51" stroke-width="1.4" fill="none"/>
<path d="M899.5,871.1 L909.9,870.5" stroke="#3F2B5B" stroke-width="1.4" fill="none"/>
<path d="M909.9,870.9 L920.3,870.0" stroke="#3F2B5B" stroke-width="1.4" fill="none"/>
<path d="M920.3,870.4 L930.7,871.0" stroke="#3F2B5B" stroke-width="1.4" fill="none"/>
<path d="M930.7,871.0 L941.1,870.4" stroke="#052B51" stroke-width="1.4" fill="none"/>
<path d="M941.1,871.0 L951.5,870.4" stroke="#511749" stroke-width="1.4" fill="none"/>
<path d="M951.5,870.5 L961.9,870.6" stroke="#052B51" stroke-width="1.4" fill="none"/>
<path d="M961.9,870.6 L972.3,870.8" stroke="#052B51" stroke-width="1.4" fill="none"/>
<path d="M972.3,870.5 L982.7,870.5" stroke="#052B51" stroke-width="1.4" fill="none"/>
<path d="M982.7,870.2 L993.1,870.0" stroke="#3F2B5B" stroke-width="1.4" fill="none"/>
<path d="M993.1,870.7 L1003.5,871.2" stroke="#3F2B5B" stroke-width="1.4" fill="none"/>
<path d="M1003.5,870.0 L1013.9,870.5" stroke="#3F2B5B" stroke-width="1.4" fill="none"/>
<path d="M1013.9,870.7 L1024.3,871.1" stroke="#052B51" stroke-width="1.4" fill="none"/>
<path d="M1024.3,871.0 L1034.7,871.2" stroke="#511749" stroke-width="1.4" fill="none"/>
<path d="M1034.7,871.0 L1045.1,870.1" stroke="#511749" stroke-width="1.4" fill="none"/>
<path d="M1045.1,871.1 L1055.5,871.1" stroke="#3F2B5B" stroke-width="1.4" fill="none"/>
<path d="M1055.5,870.0 L1065.9,870.9" stroke="#58140C" stroke-width="1.4" fill="none"/>
<path d="M1065.9,870.6 L1076.3,870.3" stroke="#052B51" stroke-width="1.4" fill="none"/>
<path d="M1076.3,870.6 L1086.7,870.5" stroke="#58140C" stroke-width="1.4" fill="none"/>
<path d="M1086.7,870.4 L1097.1,870.3" stroke="#511749" stroke-width="1.4" fill="none"/>
<path d="M1097.1,871.0 L1107.5,870.1" stroke="#511749" stroke-width="1.4" fill="none"/>
<path d="M1107.5,870.2 L1117.9,870.6" stroke="#3F2B5B" stroke-width="1.4" fill="none"/>
<path d="M1117.9,870.2 L1128.3,871.0" stroke="#511749" stroke-width="1.4" fill="none"/>
<path d="M1128.3,871.0 L1138.7,870.0" stroke="#052B51" stroke-width="1.4" fill="none"/>
<path d="M1138.7,870.1 L1149.1,870.3" stroke="#3F2B5B" stroke-width="1.4" fill="none"/>
<path d="M1149.1,870.7 L1159.5,870.6" stroke="#052B51" stroke-width="1.4" fill="none"/>
<path d="M1159.5,870.6 L1169.9,870.9" stroke="#58140C" stroke-width="1.4" fill="none"/>
<path d="M1169.9,871.0 L1180.3,870.9" stroke="#58140C" stroke-width="1.4" fill="none"/>
<path d="M1180.3,870.1 L1190.7,870.1" stroke="#58140C" stroke-width="1.4" fill="none"/>
<path d="M1190.7,871.0 L1201.1,870.1" stroke="#58140C" stroke-width="1.4" fill="none"/>
<rect x="687.3" y="875" width="523.1000000000001" height="1" fill="rgba(36,41,46,0.11)" />
<path d="M691.5,854.8 L701.9,854.2 L712.3,856.2 L722.7,854.8 L733.1,853.5 L743.5,846.4 L753.9,855.5 L764.3,852.5 L774.7,850.5 L785.1,852.5 L795.5,848.1 L805.9,817.8 L816.3,757.3 L826.7,843.1 L837.1,854.8 L847.5,852.5 L857.9,856.5 L868.3,854.2 L878.7,849.1 L889.1,852.1 L899.5,849.5 L909.9,856.5 L920.3,855.5 L930.7,855.2 L941.1,856.5 L951.5,853.5 L961.9,849.8 L972.3,855.5 L982.7,846.4 L993.1,854.2 L1003.5,858.9 L1013.9,854.8 L1024.3,859.2 L1034.7,853.8 L1045.1,850.5 L1055.5,855.5 L1065.9,855.2 L1076.3,853.5 L1086.7,857.5 L1097.1,855.5 L1107.5,852.8 L1117.9,858.9 L1128.3,854.2 L1138.7,852.8 L1149.1,859.2 L1159.5,857.5 L1169.9,847.4 L1180.3,854.8 L1190.7,854.8 L1201.1,854.8" fill="none" stroke="#F9D0BC" stroke-width="1" stroke-linejoin="round"/>
<rect x="635.2" y="901.7" width="14" height="4" rx="1" fill="#511749"/>
<text x="657.0" y="907.0" font-size="12" fill="#24292e" textLength="134.0" lengthAdjust="spacingAndGlyphs" >netdata.disk.sdu.writes</text>
<text x="800.0" y="907.0" font-size="12" fill="#24292e" textLength="90.8" lengthAdjust="spacingAndGlyphs" >Mean: 15.0 kB/s</text>
<rect x="902.0" y="901.7" width="14" height="4" rx="1" fill="#3F2B5B"/>
<text x="923.8" y="907.0" font-size="12" fill="#24292e" textLength="132.9" lengthAdjust="spacingAndGlyphs" >netdata.disk.sdv.writes</text>
<text x="1065.8" y="907.0" font-size="12" fill="#24292e" textLength="91.5" lengthAdjust="spacingAndGlyphs" >Mean: 14.8 kB/s</text>
<rect x="635.2" y="925.7" width="14" height="4" rx="1" fill="#E0F9D7"/>
<text x="657.0" y="931.0" font-size="12" fill="#24292e" textLength="136.3" lengthAdjust="spacingAndGlyphs" >netdata.disk.sdw.writes</text>
<text x="802.0" y="931.0" font-size="12" fill="#24292e" textLength="90.9" lengthAdjust="spacingAndGlyphs" >Mean: 14.7 kB/s</text>
<rect x="903.3" y="925.7" width="14" height="4" rx="1" fill="#FCEACA"/>
<text x="925.2" y="931.0" font-size="12" fill="#24292e" textLength="133.8" lengthAdjust="spacingAndGlyphs" >netdata.disk.sdx.writes</text>
<text x="1067.8" y="931.0" font-size="12" fill="#24292e" textLength="91.5" lengthAdjust="spacingAndGlyphs" >Mean: 14.2 kB/s</text>
<rect x="635.2" y="948.7" width="14" height="4" rx="1" fill="#CFFAFF"/>
<text x="657.0" y="954.0" font-size="12" fill="#24292e" textLength="133.3" lengthAdjust="spacingAndGlyphs" >netdata.disk.sdy.writes</text>
<text x="799.4" y="954.0" font-size="12" fill="#24292e" textLength="91.4" lengthAdjust="spacingAndGlyphs" >Mean: 1.34 kB/s</text>
<rect x="901.0" y="948.7" width="14" height="4" rx="1" fill="#F9E2D2"/>
<text x="923.5" y="954.0" font-size="12" fill="#24292e" textLength="133.2" lengthAdjust="spacingAndGlyphs" >netdata.disk.sdz.writes</text>
<text x="1065.8" y="954.0" font-size="12" fill="#24292e" textLength="88.1" lengthAdjust="spacingAndGlyphs" >Mean: 105 kB/s</text>
<rect x="635.2" y="971.7" width="14" height="4" rx="1" fill="#FCE2DE"/>
<text x="657.0" y="977.0" font-size="12" fill="#24292e" textLength="66.3" lengthAdjust="spacingAndGlyphs" >Mean-Read</text>
<text x="732.0" y="977.0" font-size="12" fill="#24292e" textLength="93.3" lengthAdjust="spacingAndGlyphs" >Mean: 3.29 kB/s</text>
<rect x="836.0" y="971.7" width="14" height="4" rx="1" fill="#BADFF4"/>
<text x="858.0" y="977.0" font-size="12" fill="#24292e" textLength="66.5" lengthAdjust="spacingAndGlyphs" >Mean-Write</text>
<text x="933.2" y="977.0" font-size="12" fill="#24292e" textLength="91.5" lengthAdjust="spacingAndGlyphs" >Mean: 14.8 kB/s</text>
<rect x="1307.2" y="768" width="516.2" height="1" fill="rgba(36,41,46,0.11)" />
<rect x="1307.2" y="825" width="516.2" height="1" fill="rgba(36,41,46,0.11)" />
<rect x="1307.2" y="881" width="516.2" height="1" fill="rgba(36,41,46,0.11)" />
<rect x="1610" y="745.9" width="1" height="193.10000000000002" fill="rgba(36,41,46,0.11)" />
<text x="1244.0" y="772.0" font-size="12" fill="#24292e" textLength="56.8" lengthAdjust="spacingAndGlyphs" >2.50 Mb/s</text>
<text x="1262.3" y="829.0" font-size="12" fill="#24292e" textLength="38.5" lengthAdjust="spacingAndGlyphs" >2 Mb/s</text>
<text x="1245.6" y="885.0" font-size="12" fill="#24292e" textLength="55.2" lengthAdjust="spacingAndGlyphs" >1.50 Mb/s</text>
<text x="1263.3" y="942.0" font-size="12" fill="#24292e" textLength="37.5" lengthAdjust="spacingAndGlyphs" >1 Mb/s</text>
<text x="1595.2" y="957.0" font-size="12" fill="#24292e" textLength="28.9" lengthAdjust="spacingAndGlyphs" >11:25</text>
<path d="M1311.5,813.1 L1314.8,828.7 L1325.1,824.7 L1335.3,822.4 L1345.6,831.4 L1355.8,818.4 L1366.1,816.4 L1376.4,823.7 L1386.6,824.7 L1396.9,821.4 L1407.1,823.0 L1417.4,839.3 L1427.7,832.7 L1437.9,830.4 L1448.2,818.4 L1458.4,822.4 L1468.7,822.4 L1479.0,814.7 L1489.2,820.4 L1499.5,815.7 L1509.7,813.4 L1520.0,812.7 L1530.3,819.7 L1540.5,817.4 L1550.8,820.4 L1561.0,822.7 L1571.3,809.7 L1581.6,798.4 L1591.8,811.4 L1602.1,796.4 L1612.3,798.4 L1622.6,802.4 L1632.9,791.4 L1643.1,802.4 L1653.4,801.4 L1663.6,807.1 L1673.9,795.8 L1684.2,784.8 L1694.4,790.4 L1704.7,790.4 L1714.9,787.1 L1725.2,792.4 L1735.5,795.8 L1745.7,792.4 L1756.0,772.2 L1766.2,781.5 L1776.5,789.1 L1786.8,790.4 L1797.0,786.5 L1807.3,767.5 L1817.5,775.5 L1817.5,938.5 L1311.5,938.5 Z" fill="#e0b400" fill-opacity="0.1" stroke="none"/>
<path d="M1311.5,891.2 L1314.8,907.9 L1325.1,894.6 L1335.3,905.2 L1345.6,899.5 L1355.8,899.5 L1366.1,889.6 L1376.4,896.2 L1386.6,897.9 L1396.9,900.5 L1407.1,903.2 L1417.4,914.5 L1427.7,909.5 L1437.9,895.6 L1448.2,896.6 L1458.4,895.6 L1468.7,898.5 L1479.0,893.6 L1489.2,896.2 L1499.5,888.6 L1509.7,886.6 L1520.0,889.6 L1530.3,897.6 L1540.5,896.6 L1550.8,889.6 L1561.0,895.6 L1571.3,889.6 L1581.6,868.6 L1591.8,887.2 L1602.1,879.6 L1612.3,871.3 L1622.6,878.6 L1632.9,869.6 L1643.1,873.6 L1653.4,886.2 L1663.6,868.9 L1673.9,877.3 L1684.2,872.3 L1694.4,854.3 L1704.7,865.3 L1714.9,865.3 L1725.2,854.6 L1735.5,880.3 L1745.7,867.3 L1756.0,845.3 L1766.2,860.3 L1776.5,871.3 L1786.8,851.6 L1797.0,867.3 L1807.3,844.3 L1817.5,855.3 L1817.5,938.5 L1311.5,938.5 Z" fill="#56a64b" fill-opacity="0.1" stroke="none"/>
<rect x="1307.2" y="938" width="516.2" height="1" fill="rgba(36,41,46,0.11)" />
<path d="M1311.5,813.1 L1314.8,828.7 L1325.1,824.7 L1335.3,822.4 L1345.6,831.4 L1355.8,818.4 L1366.1,816.4 L1376.4,823.7 L1386.6,824.7 L1396.9,821.4 L1407.1,823.0 L1417.4,839.3 L1427.7,832.7 L1437.9,830.4 L1448.2,818.4 L1458.4,822.4 L1468.7,822.4 L1479.0,814.7 L1489.2,820.4 L1499.5,815.7 L1509.7,813.4 L1520.0,812.7 L1530.3,819.7 L1540.5,817.4 L1550.8,820.4 L1561.0,822.7 L1571.3,809.7 L1581.6,798.4 L1591.8,811.4 L1602.1,796.4 L1612.3,798.4 L1622.6,802.4 L1632.9,791.4 L1643.1,802.4 L1653.4,801.4 L1663.6,807.1 L1673.9,795.8 L1684.2,784.8 L1694.4,790.4 L1704.7,790.4 L1714.9,787.1 L1725.2,792.4 L1735.5,795.8 L1745.7,792.4 L1756.0,772.2 L1766.2,781.5 L1776.5,789.1 L1786.8,790.4 L1797.0,786.5 L1807.3,767.5 L1817.5,775.5" fill="none" stroke="#e0b400" stroke-width="1" stroke-linejoin="round"/>
<path d="M1311.5,891.2 L1314.8,907.9 L1325.1,894.6 L1335.3,905.2 L1345.6,899.5 L1355.8,899.5 L1366.1,889.6 L1376.4,896.2 L1386.6,897.9 L1396.9,900.5 L1407.1,903.2 L1417.4,914.5 L1427.7,909.5 L1437.9,895.6 L1448.2,896.6 L1458.4,895.6 L1468.7,898.5 L1479.0,893.6 L1489.2,896.2 L1499.5,888.6 L1509.7,886.6 L1520.0,889.6 L1530.3,897.6 L1540.5,896.6 L1550.8,889.6 L1561.0,895.6 L1571.3,889.6 L1581.6,868.6 L1591.8,887.2 L1602.1,879.6 L1612.3,871.3 L1622.6,878.6 L1632.9,869.6 L1643.1,873.6 L1653.4,886.2 L1663.6,868.9 L1673.9,877.3 L1684.2,872.3 L1694.4,854.3 L1704.7,865.3 L1714.9,865.3 L1725.2,854.6 L1735.5,880.3 L1745.7,867.3 L1756.0,845.3 L1766.2,860.3 L1776.5,871.3 L1786.8,851.6 L1797.0,867.3 L1807.3,844.3 L1817.5,855.3" fill="none" stroke="#56a64b" stroke-width="1" stroke-linejoin="round"/>
<rect x="1248.3" y="971.7" width="14" height="4" rx="1" fill="#56a64b"/>
<text x="1270.0" y="977.0" font-size="12" fill="#24292e" textLength="48.8" lengthAdjust="spacingAndGlyphs" >recieved</text>
<text x="1327.5" y="977.0" font-size="12" fill="#24292e" textLength="95.4" lengthAdjust="spacingAndGlyphs" >Mean: 1.49 Mb/s</text>
<rect x="1433.6" y="971.7" width="14" height="4" rx="1" fill="#e0b400"/>
<text x="1455.5" y="977.0" font-size="12" fill="#24292e" textLength="24.6" lengthAdjust="spacingAndGlyphs" >sent</text>
<text x="1489.4" y="977.0" font-size="12" fill="#24292e" textLength="93.8" lengthAdjust="spacingAndGlyphs" >Mean: 2.16 Mb/s</text>
</svg>
</body></html>
